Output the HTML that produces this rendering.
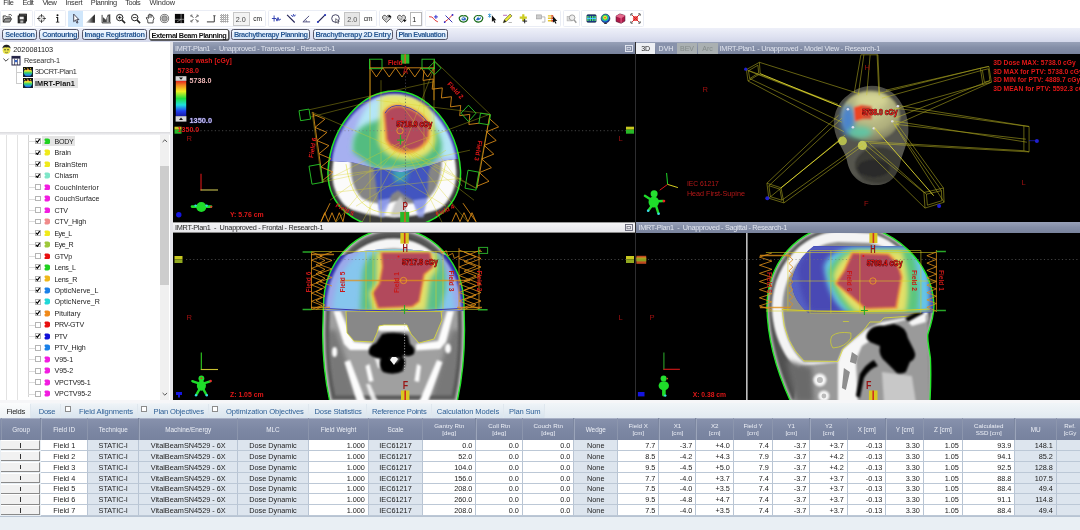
<!DOCTYPE html>
<html lang="en"><head><meta charset="utf-8"><title>External Beam Planning</title>
<style>
html,body{margin:0;padding:0}
body{filter:blur(0.35px);width:1080px;height:530px;overflow:hidden;position:relative;background:#fff;font-family:"Liberation Sans",sans-serif}
.a{position:absolute;box-sizing:border-box}
.t{position:absolute;white-space:pre}
svg{position:absolute;overflow:hidden}
</style></head>
<body>
<div class="a" style="left:0px;top:0px;width:1080px;height:10px;background:#fff"></div>
<span class="t" style="left:3.30px;top:-2.00px;font-size:7.4px;line-height:10px;color:#333;letter-spacing:-0.481px;">File</span>
<span class="t" style="left:22.50px;top:-2.00px;font-size:7.4px;line-height:10px;color:#333;letter-spacing:-0.438px;">Edit</span>
<span class="t" style="left:42.50px;top:-2.00px;font-size:7.4px;line-height:10px;color:#333;letter-spacing:-0.476px;">View</span>
<span class="t" style="left:65.50px;top:-2.00px;font-size:7.4px;line-height:10px;color:#333;letter-spacing:-0.284px;">Insert</span>
<span class="t" style="left:90.80px;top:-2.00px;font-size:7.4px;line-height:10px;color:#333;letter-spacing:-0.350px;">Planning</span>
<span class="t" style="left:125.30px;top:-2.00px;font-size:7.4px;line-height:10px;color:#333;letter-spacing:-0.455px;">Tools</span>
<span class="t" style="left:149.50px;top:-2.00px;font-size:7.4px;line-height:10px;color:#333;letter-spacing:-0.136px;">Window</span>
<div class="a" style="left:0px;top:10px;width:1080px;height:18px;background:#fff"></div>
<div class="a" style="left:0px;top:10.3px;width:32.5px;height:17.2px;background:#fff;border:1px solid #eaedf5;border-radius:1.5px"></div>
<div class="a" style="left:34px;top:10.3px;width:32px;height:17.2px;background:#fff;border:1px solid #eaedf5;border-radius:1.5px"></div>
<div class="a" style="left:67.5px;top:10.3px;width:198.0px;height:17.2px;background:#fff;border:1px solid #eaedf5;border-radius:1.5px"></div>
<div class="a" style="left:267.5px;top:10.3px;width:109.5px;height:17.2px;background:#fff;border:1px solid #eaedf5;border-radius:1.5px"></div>
<div class="a" style="left:378.5px;top:10.3px;width:44.5px;height:17.2px;background:#fff;border:1px solid #eaedf5;border-radius:1.5px"></div>
<div class="a" style="left:424.5px;top:10.3px;width:136.0px;height:17.2px;background:#fff;border:1px solid #eaedf5;border-radius:1.5px"></div>
<div class="a" style="left:562.5px;top:10.3px;width:17.0px;height:17.2px;background:#fff;border:1px solid #eaedf5;border-radius:1.5px"></div>
<div class="a" style="left:581px;top:10.3px;width:62.5px;height:17.2px;background:#fff;border:1px solid #eaedf5;border-radius:1.5px"></div>
<div class="a" style="left:68px;top:11px;width:14.6px;height:15.6px;background:#cfe6fb"></div>
<svg style="left:2.00px;top:13.30px" width="11" height="11" viewBox="-5.5 -5.5 11 11"><path d="M-4.3,3.6V-2.6h2.6l1,1h3.6v1.2" fill="#ddd" stroke="#222" stroke-width=".8"/><path d="M-4.3,3.6l1.8,-3.4h6.6l-1.8,3.4z" fill="#999" stroke="#222" stroke-width=".8"/><path d="M1,-3.6q2.4,-1.2 3.4,0.8" fill="none" stroke="#222" stroke-width=".8"/></svg>
<svg style="left:17.00px;top:13.30px" width="11" height="11" viewBox="-5.5 -5.5 11 11"><rect x="-3.2" y="-4.4" width="7.2" height="7" fill="#666" stroke="#111" stroke-width=".8"/><rect x="-4.4" y="-2.6" width="7.2" height="7" fill="#333" stroke="#111" stroke-width=".8"/><rect x="-2.8" y="-1.8" width="4" height="2.6" fill="#eee"/><rect x="-2.2" y="2" width="3" height="2.2" fill="#bbb"/></svg>
<svg style="left:35.50px;top:13.30px" width="11" height="11" viewBox="-5.5 -5.5 11 11"><circle r="3" fill="none" stroke="#444" stroke-width=".8"/><path d="M-4.4,0h2.8M1.6,0h2.8M0,-4.4v2.8M0,1.6v2.8" stroke="#333" stroke-width=".9"/><circle r=".9" fill="#fff" stroke="#555" stroke-width=".5"/></svg>
<svg style="left:51.50px;top:13.30px" width="11" height="11" viewBox="-5.5 -5.5 11 11"><circle cy="-3.3" r="1" fill="#111"/><path d="M-1.3,-1.4h2v4.6h1.1v.9h-3.4v-.9h1.2v-3.7h-.9z" fill="#111"/></svg>
<svg style="left:69.50px;top:13.30px" width="11" height="11" viewBox="-5.5 -5.5 11 11"><path d="M-1.8,-4.4L-1.8,3.2L0,1.5L1.4,4.6L2.5,4.1L1.2,1.1L3.4,1.1Z" fill="#fff" stroke="#223" stroke-width=".8" stroke-linejoin="round"/></svg>
<svg style="left:85.00px;top:13.30px" width="11" height="11" viewBox="-5.5 -5.5 11 11"><defs><linearGradient id="gw" x1="0" x2="1"><stop offset="0" stop-color="#ddd"/><stop offset="1" stop-color="#111"/></linearGradient></defs><path d="M-4.6,4.2L4.4,-4.2V4.2Z" fill="url(#gw)"/></svg>
<svg style="left:100.50px;top:13.30px" width="11" height="11" viewBox="-5.5 -5.5 11 11"><path d="M-4.4,4.4L-4.4,-3.6M-4.4,4.4L4.4,4.4" stroke="#111" stroke-width=".8" fill="none"/><path d="M-3.6,3.8V-1.5L-0.6,1.2L1.2,-3.8L3.8,-4.3V3.8Z" fill="#444"/><path d="M0.2,3.8V-1L2.2,-3V3.8Z" fill="#aaa"/></svg>
<svg style="left:115.00px;top:13.30px" width="11" height="11" viewBox="-5.5 -5.5 11 11"><circle cx="-.8" cy="-.9" r="3.2" fill="#fff" stroke="#222" stroke-width="1"/><path d="M1.6,1.6L4.6,4.6" stroke="#222" stroke-width="1.5"/><path d="M-2.6,-.9h3.6M-.8,-2.7v3.6" stroke="#222" stroke-width=".9"/></svg>
<svg style="left:129.50px;top:13.30px" width="11" height="11" viewBox="-5.5 -5.5 11 11"><circle cx="-.8" cy="-.9" r="3.2" fill="#fff" stroke="#222" stroke-width="1"/><path d="M1.6,1.6L4.6,4.6" stroke="#222" stroke-width="1.5"/><path d="M-2.6,-.9h3.6" stroke="#222" stroke-width=".9"/></svg>
<svg style="left:144.50px;top:13.30px" width="11" height="11" viewBox="-5.5 -5.5 11 11"><path d="M-2.6,4.4L-2.9,1.6L-4.4,-.6L-3.4,-1.2L-2.2,0V-3.4L-1.3,-3.4V-4.3L-.2,-4.3V-3.8L.9,-3.8V-3.2L2,-3.2L2.6,-1.4L3.6,-.6L2.6,2.2V4.4Z" fill="#fff" stroke="#222" stroke-width=".8" stroke-linejoin="round"/><path d="M-1.3,-3.2V-.6M-.2,-3.6V-.6M.9,-3.4V-.6" stroke="#222" stroke-width=".5"/></svg>
<svg style="left:158.50px;top:13.30px" width="11" height="11" viewBox="-5.5 -5.5 11 11"><circle r="4.1" fill="#f4f4f4" stroke="#444" stroke-width=".7"/><circle r="2.7" fill="#a8a8a8" stroke="#555" stroke-width=".6"/></svg>
<svg style="left:174.00px;top:13.30px" width="11" height="11" viewBox="-5.5 -5.5 11 11"><rect x="-4.6" y="-4.6" width="9.2" height="9.2" fill="#0a0a0a"/><path d="M-4.6,.8h9.2M1.6,-4.6v9.2M-2.4,3.4L1.6,.8" stroke="#ddd" stroke-width=".5"/></svg>
<svg style="left:188.50px;top:13.30px" width="11" height="11" viewBox="-5.5 -5.5 11 11"><path d="M-3.2,-2.8l2,2M3.2,-2.8l-2,2M-3.2,2.8l2,-2M3.2,2.8l-2,-2" stroke="#222" stroke-width=".9"/><path d="M-3.6,-1.8v-1.6h1.6M3.6,-1.8v-1.6h-1.6M-3.6,1.8v1.6h1.6M3.6,1.8v1.6h-1.6" stroke="#222" stroke-width=".6" fill="none"/></svg>
<svg style="left:205.50px;top:13.30px" width="11" height="11" viewBox="-5.5 -5.5 11 11"><path d="M-4.6,3.4h7.4V-2.8" stroke="#222" stroke-width=".9" fill="none"/><path d="M1.6,-2.8h2.6" stroke="#222" stroke-width=".6"/></svg>
<svg style="left:219.00px;top:13.30px" width="11" height="11" viewBox="-5.5 -5.5 11 11"><path d="M-4.4,-3h8.8M-4.4,-1h8.8M-4.4,1h8.8M-4.4,3h8.8M-3,-4.4v8.8M-1,-4.4v8.8M1,-4.4v8.8M3,-4.4v8.8" stroke="#777" stroke-width=".7" stroke-dasharray="1.2 .6"/></svg>
<div class="a" style="left:232.5px;top:12.3px;width:17px;height:13.4px;background:#f3f3f3;border:1px solid #c8c8c8"></div>
<span class="t" style="left:235.80px;top:15.00px;font-size:7.2px;line-height:10px;color:#444;">2.0</span>
<span class="t" style="left:253.20px;top:14.00px;font-size:6.6px;line-height:10px;color:#222;">cm</span>
<svg style="left:270.50px;top:13.30px" width="11" height="11" viewBox="-5.5 -5.5 11 11"><path d="M-4.6,0h2.2M-2.4,-3v6M-2.4,0h2l.9,2.6l1,-3.6l1,3l.8,-1.2h1" stroke="#23a" stroke-width=".9" fill="none"/></svg>
<svg style="left:285.50px;top:13.30px" width="11" height="11" viewBox="-5.5 -5.5 11 11"><path d="M-4.4,-3.6L3.2,4" stroke="#225" stroke-width="1.1"/><path d="M-.6,-3.4l2,1.6l.6,-2.4l1,2l1,-1.6" stroke="#23a" stroke-width=".8" fill="none"/></svg>
<svg style="left:300.50px;top:13.30px" width="11" height="11" viewBox="-5.5 -5.5 11 11"><path d="M3.6,3.4H-3.6L2.6,-2.6" stroke="#447" stroke-width=".9" fill="none"/><path d="M0,3.4q.2,-2 -1.4,-2.4" stroke="#447" stroke-width=".6" fill="none"/></svg>
<svg style="left:315.50px;top:13.30px" width="11" height="11" viewBox="-5.5 -5.5 11 11"><path d="M-3.6,3.6L3.6,-3.6" stroke="#225" stroke-width="1.2"/><circle cx="-3.6" cy="3.6" r="1" fill="#23b"/><circle cx="3.6" cy="-3.6" r="1" fill="#23b"/></svg>
<svg style="left:330.00px;top:13.30px" width="11" height="11" viewBox="-5.5 -5.5 11 11"><circle r="3.8" fill="#fff" stroke="#335" stroke-width=".9"/><path d="M.2,.2V4.4L1.4,3.3L2.4,5L3.2,4.6L2.3,2.9H3.8Z" fill="#fff" stroke="#223" stroke-width=".6"/></svg>
<div class="a" style="left:344px;top:12.3px;width:16.4px;height:13.4px;background:#e6e6e6;border:1px solid #c4c4c4"></div>
<span class="t" style="left:347.20px;top:15.00px;font-size:7.2px;line-height:10px;color:#555;">2.0</span>
<span class="t" style="left:363.80px;top:14.00px;font-size:6.6px;line-height:10px;color:#222;">cm</span>
<svg style="left:380.50px;top:13.30px" width="11" height="11" viewBox="-5.5 -5.5 11 11"><path d="M0,3.8L-3.8,.2Q-4.8,-2.4 -2.4,-3.2Q-.8,-3.4 0,-1.8Q.8,-3.4 2.4,-3.2Q4.8,-2.4 3.8,.2Z" fill="#ddd" stroke="#333" stroke-width=".8"/><path d="M-2.4,-.8l2,2.2l1.4,-3" stroke="#555" stroke-width=".5" fill="none"/><path d="M2.2,-1.2l2,-2.6l2,2.6z" fill="#111" transform="translate(-1,0)"/></svg>
<svg style="left:395.50px;top:13.30px" width="11" height="11" viewBox="-5.5 -5.5 11 11"><path d="M0,3.8L-3.8,.2Q-4.8,-2.4 -2.4,-3.2Q-.8,-3.4 0,-1.8Q.8,-3.4 2.4,-3.2Q4.8,-2.4 3.8,.2Z" fill="#ddd" stroke="#333" stroke-width=".8"/><path d="M-2.4,-.8l2,2.2l1.4,-3" stroke="#555" stroke-width=".5" fill="none"/><path d="M2.2,1.2l2,2.6l2,-2.6z" fill="#111" transform="translate(-1,0)"/></svg>
<div class="a" style="left:410px;top:12.3px;width:11.6px;height:13.4px;background:#fff;border:1px solid #b8b8b8"></div>
<span class="t" style="left:412.20px;top:15.00px;font-size:7.2px;line-height:10px;color:#222;">1</span>
<svg style="left:427.50px;top:13.30px" width="11" height="11" viewBox="-5.5 -5.5 11 11"><path d="M-4.4,-1.8Q-1,-2 0,0T4.4,3.4" stroke="#d22" stroke-width=".9" fill="none"/><path d="M.4,-1.6h4M2.4,-3.6v4" stroke="#22c" stroke-width=".9"/></svg>
<svg style="left:442.50px;top:13.30px" width="11" height="11" viewBox="-5.5 -5.5 11 11"><path d="M-4.2,3.8Q0,1 4.2,-3.8" stroke="#d22" stroke-width=".9" fill="none"/><path d="M-3,-3L3.8,3.8" stroke="#22a" stroke-width=".9"/><circle cx="-3.8" cy="3.6" r=".9" fill="#22c"/><circle cx="4" cy="-3.6" r=".9" fill="#22c"/></svg>
<svg style="left:457.50px;top:13.30px" width="11" height="11" viewBox="-5.5 -5.5 11 11"><path d="M-4.4,-.6Q-3,-3.6 0,-2.6Q3,-3.8 4.4,-.6Q3.8,3.4 0,3.6Q-3.8,3.4 -4.4,-.6Z" fill="#fff" stroke="#161" stroke-width="1.1"/><ellipse cx=".2" cy=".4" rx="2.3" ry="1.7" fill="#36c"/><ellipse cx="-.3" cy="0" rx=".9" ry=".6" fill="#cfe"/></svg>
<svg style="left:472.50px;top:13.30px" width="11" height="11" viewBox="-5.5 -5.5 11 11"><path d="M-4.4,-.2Q-3,-3.6 0,-2.8Q3.4,-3.8 4.4,-.6Q3.8,3.4 0,3.6Q-3.8,3.4 -4.4,-.2Z" fill="#fff" stroke="#161" stroke-width="1.1"/><path d="M-2.6,1.4Q-1,-2.6 2.6,-1.4Q2,2.6 -2.6,1.4Z" fill="#26c"/><ellipse cx="1" cy="-1" rx="1.1" ry=".7" fill="#dff"/></svg>
<svg style="left:487.00px;top:13.30px" width="11" height="11" viewBox="-5.5 -5.5 11 11"><path d="M-1.2,-2.6L-1.2,4L.2,2.7L1.4,5L2.4,4.5L1.3,2.3L3.2,2.3Z" fill="#111" transform="translate(.6,-.6)"/><path d="M-4.4,-4.4l3,3M-1.4,-4.4l-3,3M-2.9,-5v4.2" stroke="#28c" stroke-width=".8"/></svg>
<svg style="left:502.00px;top:13.30px" width="11" height="11" viewBox="-5.5 -5.5 11 11"><path d="M-4.2,4.2L-3,1.2L2.6,-4.4L4.4,-2.6L-1.2,3Z" fill="#ee3" stroke="#553" stroke-width=".7"/><path d="M-4.2,4.2l1.2,-3l1.8,1.8z" fill="#222"/><path d="M-4.4,-3.2h4" stroke="#a4a" stroke-width=".8"/><path d="M1,4h3.4" stroke="#888" stroke-width=".6"/></svg>
<svg style="left:517.50px;top:13.30px" width="11" height="11" viewBox="-5.5 -5.5 11 11"><path d="M-.2,-4.2V2.6M-3.8,-.8H3.4" stroke="#cc2" stroke-width="2.2"/><path d="M1.2,.4V4.8M-1,2.6H3.6" stroke="#111" stroke-width=".9"/></svg>
<svg style="left:534.50px;top:13.30px" width="11" height="11" viewBox="-5.5 -5.5 11 11"><rect x="-4" y="-3.6" width="5" height="4" fill="#ccc" stroke="#999" stroke-width=".6"/><path d="M1,-1.6h3.4v5.2h-3" stroke="#aaa" stroke-width=".8" fill="none"/></svg>
<svg style="left:547.00px;top:13.30px" width="11" height="11" viewBox="-5.5 -5.5 11 11"><path d="M-4.6,-2.6h5M-4.6,-.2h5M-4.6,2.2h5" stroke="#e8c62a" stroke-width="1.4"/><path d="M-1,-3.8l2.4,1.2l-2.4,1.2zM-1,-1.4l2.4,1.2l-2.4,1.2zM-1,1l2.4,1.2l-2.4,1.2z" fill="#d33"/><path d="M.4,-2.4L.4,4.2L1.8,2.9L3,5.2L4,4.7L2.9,2.5L4.8,2.5Z" fill="#111"/></svg>
<svg style="left:565.50px;top:13.30px" width="11" height="11" viewBox="-5.5 -5.5 11 11"><rect x="-4.4" y="-2" width="5" height="4.4" fill="#ddd" stroke="#aaa" stroke-width=".6"/><circle cx=".6" cy="-.8" r="2.8" fill="#eee" stroke="#999" stroke-width=".9"/><path d="M2.6,1.4L4.8,4.2" stroke="#999" stroke-width="1.4"/></svg>
<svg style="left:585.50px;top:13.30px" width="11" height="11" viewBox="-5.5 -5.5 11 11"><rect x="-4.6" y="-3.8" width="9.2" height="7.6" rx="1" fill="#1a3a8a" stroke="#123" stroke-width=".6"/><path d="M-3.6,-2.6v5.2M-1.2,-2.6v5.2M1.2,-2.6v5.2M3.6,-2.6v5.2" stroke="#5e6" stroke-width="1.3"/><path d="M-4.6,0h9.2" stroke="#4cf" stroke-width="1.2"/></svg>
<svg style="left:600.00px;top:13.30px" width="11" height="11" viewBox="-5.5 -5.5 11 11"><defs><radialGradient id="gg" cx=".45" cy=".4"><stop offset="0" stop-color="#e33"/><stop offset=".3" stop-color="#ee3"/><stop offset=".55" stop-color="#3c5"/><stop offset=".8" stop-color="#29d"/><stop offset="1" stop-color="#13a"/></radialGradient></defs><circle r="4.4" fill="url(#gg)" stroke="#124" stroke-width=".6"/><path d="M-1.6,4.4h3.2l-.6,1h-2z" fill="#333"/></svg>
<svg style="left:614.50px;top:13.30px" width="11" height="11" viewBox="-5.5 -5.5 11 11"><path d="M-4.4,-2.4L-.6,-4.6L4.4,-3L4.4,2.6L.6,4.8L-4.4,3Z" fill="#b01848" stroke="#402" stroke-width=".6"/><path d="M-4.4,-2.4L.6,-.6L4.4,-3M.6,-.6V4.8" stroke="#f9b" stroke-width=".6" fill="none"/><path d="M-4.4,-2.4L-.6,-4.6L4.4,-3L.6,-.6Z" fill="#e46a8c"/></svg>
<svg style="left:629.50px;top:13.30px" width="11" height="11" viewBox="-5.5 -5.5 11 11"><circle r="2.6" fill="#e33" opacity=".85"/><path d="M-3.4,-3.4L3.4,3.4M3.4,-3.4L-3.4,3.4" stroke="#c22" stroke-width="1"/><path d="M-4.6,-2.8v-1.8h1.8M4.6,-2.8v-1.8h-1.8M-4.6,2.8v1.8h1.8M4.6,2.8v1.8h-1.8" stroke="#222" stroke-width=".9" fill="none"/></svg>
<div class="a" style="left:0px;top:28px;width:1080px;height:14px;background:linear-gradient(#eef0f9,#dfe2f1 60%,#d3d7ea)"></div>
<div class="a" style="left:2.3px;top:29.3px;width:34.7px;height:10.6px;background:linear-gradient(#f2f8ff,#d6e6f7);border:1px solid #556;border-radius:2.5px"></div>
<span class="t" style="left:5.20px;top:30.00px;font-size:7.4px;line-height:10px;color:#2a5a94;font-weight:bold;letter-spacing:-0.377px;">Selection</span>
<div class="a" style="left:39.3px;top:29.3px;width:40.0px;height:10.6px;background:linear-gradient(#f2f8ff,#d6e6f7);border:1px solid #556;border-radius:2.5px"></div>
<span class="t" style="left:42.20px;top:30.00px;font-size:7.4px;line-height:10px;color:#2a5a94;font-weight:bold;letter-spacing:-0.506px;">Contouring</span>
<div class="a" style="left:81.5px;top:29.3px;width:65.5px;height:10.6px;background:linear-gradient(#f2f8ff,#d6e6f7);border:1px solid #556;border-radius:2.5px"></div>
<span class="t" style="left:84.40px;top:30.00px;font-size:7.4px;line-height:10px;color:#2a5a94;font-weight:bold;letter-spacing:-0.351px;">Image Registration</span>
<div class="a" style="left:149px;top:29.3px;width:79.5px;height:10.6px;background:#fff;border:1px solid #555;border-radius:2px;box-shadow:.5px .8px 0 #333"></div>
<span class="t" style="left:151.60px;top:31.00px;font-size:7.4px;line-height:10px;color:#111;font-weight:bold;letter-spacing:-0.446px;">External Beam Planning</span>
<div class="a" style="left:231px;top:29.3px;width:79px;height:10.6px;background:linear-gradient(#f2f8ff,#d6e6f7);border:1px solid #556;border-radius:2.5px"></div>
<span class="t" style="left:233.90px;top:30.00px;font-size:7.4px;line-height:10px;color:#2a5a94;font-weight:bold;letter-spacing:-0.514px;">Brachytherapy Planning</span>
<div class="a" style="left:312.5px;top:29.3px;width:80.5px;height:10.6px;background:linear-gradient(#f2f8ff,#d6e6f7);border:1px solid #556;border-radius:2.5px"></div>
<span class="t" style="left:315.40px;top:30.00px;font-size:7.4px;line-height:10px;color:#2a5a94;font-weight:bold;letter-spacing:-0.409px;">Brachytherapy 2D Entry</span>
<div class="a" style="left:395.5px;top:29.3px;width:52.0px;height:10.6px;background:linear-gradient(#f2f8ff,#d6e6f7);border:1px solid #556;border-radius:2.5px"></div>
<span class="t" style="left:398.40px;top:30.00px;font-size:7.4px;line-height:10px;color:#2a5a94;font-weight:bold;letter-spacing:-0.553px;">Plan Evaluation</span>
<div class="a" style="left:0px;top:42px;width:173px;height:361px;background:#e9e9ee"></div>
<div class="a" style="left:0px;top:42px;width:169.5px;height:89.5px;background:#fff"></div>
<div class="a" style="left:0px;top:131.5px;width:169.5px;height:3.5px;background:linear-gradient(#d8d8dc,#f4f4f6)"></div>
<div class="a" style="left:0px;top:135px;width:169.5px;height:266px;background:#fff"></div>
<svg style="left:1px;top:43.5px" width="11" height="11" viewBox="0 0 11 11"><circle cx="5.5" cy="6.2" r="3.8" fill="#e8e24a"/><path d="M1.2,4.6Q2,0.6 5.5,0.8Q9,0.6 9.8,4.6Q7.6,3 5.5,3.4Q3.2,3 1.2,4.6Z" fill="#222"/><circle cx="4" cy="5.8" r=".7" fill="#222"/><circle cx="7" cy="5.8" r=".7" fill="#222"/><path d="M4,8.2q1.5,1 3,0" stroke="#553" stroke-width=".6" fill="none"/></svg>
<span class="t" style="left:13.30px;top:45.00px;font-size:7.3px;line-height:10px;color:#222;letter-spacing:-0.025px;">2020081103</span>
<svg style="left:2px;top:56px" width="8" height="8" viewBox="0 0 8 8"><path d="M1.4,2.6L4,5.2L6.6,2.6" stroke="#444" stroke-width="1" fill="none"/></svg>
<svg style="left:11px;top:54.5px" width="10" height="11" viewBox="0 0 10 11"><rect x="1" y="1.4" width="8" height="8.6" fill="#fff" stroke="#224" stroke-width="1"/><rect x="1" y="1.4" width="8" height="2.2" fill="#224"/><path d="M3.6,3.6v6.4M6.4,3.6v6.4" stroke="#224" stroke-width=".7"/><rect x="3.8" y="5" width="2.4" height="2.2" fill="#36c"/></svg>
<span class="t" style="left:24.00px;top:56.00px;font-size:7.3px;line-height:10px;color:#333;letter-spacing:-0.173px;">Research-1</span>
<div class="a" style="left:16px;top:66px;width:0.8px;height:17.5px;background:#ccc"></div>
<div class="a" style="left:16px;top:71.5px;width:6px;height:0.8px;background:#ccc"></div>
<div class="a" style="left:16px;top:82.8px;width:6px;height:0.8px;background:#ccc"></div>
<svg style="left:22.5px;top:66.5px" width="10" height="10" viewBox="0 0 10 10"><defs><linearGradient id="pl1" x1="0" y1="0" x2="0" y2="1"><stop offset="0" stop-color="#d22"/><stop offset=".3" stop-color="#ee3"/><stop offset=".55" stop-color="#3c6"/><stop offset=".8" stop-color="#29e"/><stop offset="1" stop-color="#23a"/></linearGradient></defs><rect width="10" height="10" fill="#123"/><circle cx="5" cy="5.4" r="4.2" fill="url(#pl1)"/><path d="M0,0h10v2.6l-1.6,-1l-1.6,1.6l-1.8,-1.6l-1.8,1.6l-1.6,-1.6l-1.6,1z" fill="#111"/><path d="M1,1l1,1M4,.6l1,1.2M7,1l1,1" stroke="#ee3" stroke-width=".8"/></svg>
<span class="t" style="left:35.00px;top:67.00px;font-size:7.3px;line-height:10px;color:#333;letter-spacing:-0.309px;">3DCRT-Plan1</span>
<div class="a" style="left:33.5px;top:77.8px;width:44.5px;height:10.6px;background:#e4e4e4"></div>
<svg style="left:22.5px;top:77.8px" width="10" height="10" viewBox="0 0 10 10"><defs><linearGradient id="pl2" x1="0" y1="0" x2="0" y2="1"><stop offset="0" stop-color="#d22"/><stop offset=".3" stop-color="#ee3"/><stop offset=".55" stop-color="#3c6"/><stop offset=".8" stop-color="#29e"/><stop offset="1" stop-color="#23a"/></linearGradient></defs><rect width="10" height="10" fill="#123"/><circle cx="5" cy="5.4" r="4.2" fill="url(#pl2)"/><path d="M0,0h10v2.6l-1.6,-1l-1.6,1.6l-1.8,-1.6l-1.8,1.6l-1.6,-1.6l-1.6,1z" fill="#111"/><path d="M1,1l1,1M4,.6l1,1.2M7,1l1,1" stroke="#ee3" stroke-width=".8"/></svg>
<span class="t" style="left:35.00px;top:79.00px;font-size:7.3px;line-height:10px;color:#111;font-weight:bold;letter-spacing:0.066px;">IMRT-Plan1</span>
<div class="a" style="left:5.5px;top:135px;width:0.6px;height:266px;background:#e2e2e2"></div>
<div class="a" style="left:16.5px;top:135px;width:0.6px;height:266px;background:#e2e2e2"></div>
<div class="a" style="left:27.5px;top:135px;width:0.6px;height:262px;background:#d4d4d4"></div>
<div class="a" style="left:41.5px;top:135.6px;width:33.5px;height:10.8px;background:#e4e4e4"></div>
<div class="a" style="left:27.5px;top:141.1px;width:7px;height:0.6px;background:#dcdcdc"></div>
<div class="a" style="left:35.2px;top:138.2px;width:5.6px;height:5.8px;background:#fff;border:.7px solid #b4b4b4"></div>
<svg style="left:35.2px;top:138.2px" width="5.8" height="5.8" viewBox="0 0 5.8 5.8"><path d="M1.1,2.8L2.4,4.3L4.7,1.2" stroke="#000" stroke-width="1.25" fill="none"/></svg>
<svg style="left:43.8px;top:137.7px" width="6.6" height="6.8" viewBox="0 0 6.6 6.8"><path d="M1.4,.4H4Q6.3,.8 6.3,3.4Q6.3,6 4,6.4H1.4Q.3,6.2 .5,4.6L1.5,3.4L.5,2.2Q.3,.6 1.4,.4Z" fill="#1fd11f"/></svg>
<span class="t" style="left:54.50px;top:137.00px;font-size:7.1px;line-height:10px;color:#222;letter-spacing:-0.280px;">BODY</span>
<div class="a" style="left:27.5px;top:152.57999999999998px;width:7px;height:0.6px;background:#dcdcdc"></div>
<div class="a" style="left:35.2px;top:149.67999999999998px;width:5.6px;height:5.8px;background:#fff;border:.7px solid #b4b4b4"></div>
<svg style="left:35.2px;top:149.68px" width="5.8" height="5.8" viewBox="0 0 5.8 5.8"><path d="M1.1,2.8L2.4,4.3L4.7,1.2" stroke="#000" stroke-width="1.25" fill="none"/></svg>
<svg style="left:43.8px;top:149.18px" width="6.6" height="6.8" viewBox="0 0 6.6 6.8"><path d="M1.4,.4H4Q6.3,.8 6.3,3.4Q6.3,6 4,6.4H1.4Q.3,6.2 .5,4.6L1.5,3.4L.5,2.2Q.3,.6 1.4,.4Z" fill="#f0ea1a"/></svg>
<span class="t" style="left:54.50px;top:148.00px;font-size:7.1px;line-height:10px;color:#222;letter-spacing:-0.015px;">Brain</span>
<div class="a" style="left:27.5px;top:164.06px;width:7px;height:0.6px;background:#dcdcdc"></div>
<div class="a" style="left:35.2px;top:161.16px;width:5.6px;height:5.8px;background:#fff;border:.7px solid #b4b4b4"></div>
<svg style="left:35.2px;top:161.16px" width="5.8" height="5.8" viewBox="0 0 5.8 5.8"><path d="M1.1,2.8L2.4,4.3L4.7,1.2" stroke="#000" stroke-width="1.25" fill="none"/></svg>
<svg style="left:43.8px;top:160.66px" width="6.6" height="6.8" viewBox="0 0 6.6 6.8"><path d="M1.4,.4H4Q6.3,.8 6.3,3.4Q6.3,6 4,6.4H1.4Q.3,6.2 .5,4.6L1.5,3.4L.5,2.2Q.3,.6 1.4,.4Z" fill="#f0ea1a"/></svg>
<span class="t" style="left:54.50px;top:160.00px;font-size:7.1px;line-height:10px;color:#222;letter-spacing:-0.016px;">BrainStem</span>
<div class="a" style="left:27.5px;top:175.54px;width:7px;height:0.6px;background:#dcdcdc"></div>
<div class="a" style="left:35.2px;top:172.64px;width:5.6px;height:5.8px;background:#fff;border:.7px solid #b4b4b4"></div>
<svg style="left:35.2px;top:172.64px" width="5.8" height="5.8" viewBox="0 0 5.8 5.8"><path d="M1.1,2.8L2.4,4.3L4.7,1.2" stroke="#000" stroke-width="1.25" fill="none"/></svg>
<svg style="left:43.8px;top:172.14px" width="6.6" height="6.8" viewBox="0 0 6.6 6.8"><path d="M1.4,.4H4Q6.3,.8 6.3,3.4Q6.3,6 4,6.4H1.4Q.3,6.2 .5,4.6L1.5,3.4L.5,2.2Q.3,.6 1.4,.4Z" fill="#7fe6c8"/></svg>
<span class="t" style="left:54.50px;top:171.00px;font-size:7.1px;line-height:10px;color:#222;letter-spacing:-0.011px;">Chiasm</span>
<div class="a" style="left:27.5px;top:187.01999999999998px;width:7px;height:0.6px;background:#dcdcdc"></div>
<div class="a" style="left:35.2px;top:184.11999999999998px;width:5.6px;height:5.8px;background:#fff;border:.7px solid #b4b4b4"></div>
<svg style="left:43.8px;top:183.62px" width="6.6" height="6.8" viewBox="0 0 6.6 6.8"><path d="M1.4,.4H4Q6.3,.8 6.3,3.4Q6.3,6 4,6.4H1.4Q.3,6.2 .5,4.6L1.5,3.4L.5,2.2Q.3,.6 1.4,.4Z" fill="#f21de0"/></svg>
<span class="t" style="left:54.50px;top:183.00px;font-size:7.1px;line-height:10px;color:#222;letter-spacing:0.145px;">CouchInterior</span>
<div class="a" style="left:27.5px;top:198.5px;width:7px;height:0.6px;background:#dcdcdc"></div>
<div class="a" style="left:35.2px;top:195.6px;width:5.6px;height:5.8px;background:#fff;border:.7px solid #b4b4b4"></div>
<svg style="left:43.8px;top:195.1px" width="6.6" height="6.8" viewBox="0 0 6.6 6.8"><path d="M1.4,.4H4Q6.3,.8 6.3,3.4Q6.3,6 4,6.4H1.4Q.3,6.2 .5,4.6L1.5,3.4L.5,2.2Q.3,.6 1.4,.4Z" fill="#f21de0"/></svg>
<span class="t" style="left:54.50px;top:194.00px;font-size:7.1px;line-height:10px;color:#222;">CouchSurface</span>
<div class="a" style="left:27.5px;top:209.98px;width:7px;height:0.6px;background:#dcdcdc"></div>
<div class="a" style="left:35.2px;top:207.07999999999998px;width:5.6px;height:5.8px;background:#fff;border:.7px solid #b4b4b4"></div>
<svg style="left:43.8px;top:206.58px" width="6.6" height="6.8" viewBox="0 0 6.6 6.8"><path d="M1.4,.4H4Q6.3,.8 6.3,3.4Q6.3,6 4,6.4H1.4Q.3,6.2 .5,4.6L1.5,3.4L.5,2.2Q.3,.6 1.4,.4Z" fill="#f21de0"/></svg>
<span class="t" style="left:54.50px;top:206.00px;font-size:7.1px;line-height:10px;color:#222;letter-spacing:-0.400px;">CTV</span>
<div class="a" style="left:27.5px;top:221.45999999999998px;width:7px;height:0.6px;background:#dcdcdc"></div>
<div class="a" style="left:35.2px;top:218.55999999999997px;width:5.6px;height:5.8px;background:#fff;border:.7px solid #b4b4b4"></div>
<svg style="left:43.8px;top:218.06px" width="6.6" height="6.8" viewBox="0 0 6.6 6.8"><path d="M1.4,.4H4Q6.3,.8 6.3,3.4Q6.3,6 4,6.4H1.4Q.3,6.2 .5,4.6L1.5,3.4L.5,2.2Q.3,.6 1.4,.4Z" fill="#f08a8a"/></svg>
<span class="t" style="left:54.50px;top:217.00px;font-size:7.1px;line-height:10px;color:#222;letter-spacing:-0.156px;">CTV_High</span>
<div class="a" style="left:27.5px;top:232.94px;width:7px;height:0.6px;background:#dcdcdc"></div>
<div class="a" style="left:35.2px;top:230.04px;width:5.6px;height:5.8px;background:#fff;border:.7px solid #b4b4b4"></div>
<svg style="left:35.2px;top:230.04px" width="5.8" height="5.8" viewBox="0 0 5.8 5.8"><path d="M1.1,2.8L2.4,4.3L4.7,1.2" stroke="#000" stroke-width="1.25" fill="none"/></svg>
<svg style="left:43.8px;top:229.54px" width="6.6" height="6.8" viewBox="0 0 6.6 6.8"><path d="M1.4,.4H4Q6.3,.8 6.3,3.4Q6.3,6 4,6.4H1.4Q.3,6.2 .5,4.6L1.5,3.4L.5,2.2Q.3,.6 1.4,.4Z" fill="#f0ea1a"/></svg>
<span class="t" style="left:54.50px;top:229.00px;font-size:7.1px;line-height:10px;color:#222;letter-spacing:-0.626px;">Eye_L</span>
<div class="a" style="left:27.5px;top:244.42000000000002px;width:7px;height:0.6px;background:#dcdcdc"></div>
<div class="a" style="left:35.2px;top:241.52px;width:5.6px;height:5.8px;background:#fff;border:.7px solid #b4b4b4"></div>
<svg style="left:35.2px;top:241.52px" width="5.8" height="5.8" viewBox="0 0 5.8 5.8"><path d="M1.1,2.8L2.4,4.3L4.7,1.2" stroke="#000" stroke-width="1.25" fill="none"/></svg>
<svg style="left:43.8px;top:241.02px" width="6.6" height="6.8" viewBox="0 0 6.6 6.8"><path d="M1.4,.4H4Q6.3,.8 6.3,3.4Q6.3,6 4,6.4H1.4Q.3,6.2 .5,4.6L1.5,3.4L.5,2.2Q.3,.6 1.4,.4Z" fill="#9ec83a"/></svg>
<span class="t" style="left:54.50px;top:240.00px;font-size:7.1px;line-height:10px;color:#222;letter-spacing:-0.562px;">Eye_R</span>
<div class="a" style="left:27.5px;top:255.9px;width:7px;height:0.6px;background:#dcdcdc"></div>
<div class="a" style="left:35.2px;top:253.0px;width:5.6px;height:5.8px;background:#fff;border:.7px solid #b4b4b4"></div>
<svg style="left:43.8px;top:252.5px" width="6.6" height="6.8" viewBox="0 0 6.6 6.8"><path d="M1.4,.4H4Q6.3,.8 6.3,3.4Q6.3,6 4,6.4H1.4Q.3,6.2 .5,4.6L1.5,3.4L.5,2.2Q.3,.6 1.4,.4Z" fill="#e81010"/></svg>
<span class="t" style="left:54.50px;top:252.00px;font-size:7.1px;line-height:10px;color:#222;letter-spacing:-0.261px;">GTVp</span>
<div class="a" style="left:27.5px;top:267.38px;width:7px;height:0.6px;background:#dcdcdc"></div>
<div class="a" style="left:35.2px;top:264.48px;width:5.6px;height:5.8px;background:#fff;border:.7px solid #b4b4b4"></div>
<svg style="left:35.2px;top:264.48px" width="5.8" height="5.8" viewBox="0 0 5.8 5.8"><path d="M1.1,2.8L2.4,4.3L4.7,1.2" stroke="#000" stroke-width="1.25" fill="none"/></svg>
<svg style="left:43.8px;top:263.98px" width="6.6" height="6.8" viewBox="0 0 6.6 6.8"><path d="M1.4,.4H4Q6.3,.8 6.3,3.4Q6.3,6 4,6.4H1.4Q.3,6.2 .5,4.6L1.5,3.4L.5,2.2Q.3,.6 1.4,.4Z" fill="#1fd11f"/></svg>
<span class="t" style="left:54.50px;top:263.00px;font-size:7.1px;line-height:10px;color:#222;letter-spacing:-0.382px;">Lens_L</span>
<div class="a" style="left:27.5px;top:278.86px;width:7px;height:0.6px;background:#dcdcdc"></div>
<div class="a" style="left:35.2px;top:275.96000000000004px;width:5.6px;height:5.8px;background:#fff;border:.7px solid #b4b4b4"></div>
<svg style="left:35.2px;top:275.96px" width="5.8" height="5.8" viewBox="0 0 5.8 5.8"><path d="M1.1,2.8L2.4,4.3L4.7,1.2" stroke="#000" stroke-width="1.25" fill="none"/></svg>
<svg style="left:43.8px;top:275.46px" width="6.6" height="6.8" viewBox="0 0 6.6 6.8"><path d="M1.4,.4H4Q6.3,.8 6.3,3.4Q6.3,6 4,6.4H1.4Q.3,6.2 .5,4.6L1.5,3.4L.5,2.2Q.3,.6 1.4,.4Z" fill="#f0b81a"/></svg>
<span class="t" style="left:54.50px;top:275.00px;font-size:7.1px;line-height:10px;color:#222;letter-spacing:-0.328px;">Lens_R</span>
<div class="a" style="left:27.5px;top:290.34000000000003px;width:7px;height:0.6px;background:#dcdcdc"></div>
<div class="a" style="left:35.2px;top:287.44000000000005px;width:5.6px;height:5.8px;background:#fff;border:.7px solid #b4b4b4"></div>
<svg style="left:35.2px;top:287.44px" width="5.8" height="5.8" viewBox="0 0 5.8 5.8"><path d="M1.1,2.8L2.4,4.3L4.7,1.2" stroke="#000" stroke-width="1.25" fill="none"/></svg>
<svg style="left:43.8px;top:286.94px" width="6.6" height="6.8" viewBox="0 0 6.6 6.8"><path d="M1.4,.4H4Q6.3,.8 6.3,3.4Q6.3,6 4,6.4H1.4Q.3,6.2 .5,4.6L1.5,3.4L.5,2.2Q.3,.6 1.4,.4Z" fill="#1a80e8"/></svg>
<span class="t" style="left:54.50px;top:286.00px;font-size:7.1px;line-height:10px;color:#222;letter-spacing:0.050px;">OpticNerve_L</span>
<div class="a" style="left:27.5px;top:301.82px;width:7px;height:0.6px;background:#dcdcdc"></div>
<div class="a" style="left:35.2px;top:298.92px;width:5.6px;height:5.8px;background:#fff;border:.7px solid #b4b4b4"></div>
<svg style="left:35.2px;top:298.92px" width="5.8" height="5.8" viewBox="0 0 5.8 5.8"><path d="M1.1,2.8L2.4,4.3L4.7,1.2" stroke="#000" stroke-width="1.25" fill="none"/></svg>
<svg style="left:43.8px;top:298.42px" width="6.6" height="6.8" viewBox="0 0 6.6 6.8"><path d="M1.4,.4H4Q6.3,.8 6.3,3.4Q6.3,6 4,6.4H1.4Q.3,6.2 .5,4.6L1.5,3.4L.5,2.2Q.3,.6 1.4,.4Z" fill="#20d8d8"/></svg>
<span class="t" style="left:54.50px;top:297.00px;font-size:7.1px;line-height:10px;color:#222;letter-spacing:0.076px;">OpticNerve_R</span>
<div class="a" style="left:27.5px;top:313.3px;width:7px;height:0.6px;background:#dcdcdc"></div>
<div class="a" style="left:35.2px;top:310.40000000000003px;width:5.6px;height:5.8px;background:#fff;border:.7px solid #b4b4b4"></div>
<svg style="left:35.2px;top:310.4px" width="5.8" height="5.8" viewBox="0 0 5.8 5.8"><path d="M1.1,2.8L2.4,4.3L4.7,1.2" stroke="#000" stroke-width="1.25" fill="none"/></svg>
<svg style="left:43.8px;top:309.9px" width="6.6" height="6.8" viewBox="0 0 6.6 6.8"><path d="M1.4,.4H4Q6.3,.8 6.3,3.4Q6.3,6 4,6.4H1.4Q.3,6.2 .5,4.6L1.5,3.4L.5,2.2Q.3,.6 1.4,.4Z" fill="#f08a1a"/></svg>
<span class="t" style="left:54.50px;top:309.00px;font-size:7.1px;line-height:10px;color:#222;letter-spacing:0.039px;">Pituitary</span>
<div class="a" style="left:27.5px;top:324.78px;width:7px;height:0.6px;background:#dcdcdc"></div>
<div class="a" style="left:35.2px;top:321.88px;width:5.6px;height:5.8px;background:#fff;border:.7px solid #b4b4b4"></div>
<svg style="left:43.8px;top:321.38px" width="6.6" height="6.8" viewBox="0 0 6.6 6.8"><path d="M1.4,.4H4Q6.3,.8 6.3,3.4Q6.3,6 4,6.4H1.4Q.3,6.2 .5,4.6L1.5,3.4L.5,2.2Q.3,.6 1.4,.4Z" fill="#e81010"/></svg>
<span class="t" style="left:54.50px;top:320.00px;font-size:7.1px;line-height:10px;color:#222;letter-spacing:-0.220px;">PRV-GTV</span>
<div class="a" style="left:27.5px;top:336.26px;width:7px;height:0.6px;background:#dcdcdc"></div>
<div class="a" style="left:35.2px;top:333.36px;width:5.6px;height:5.8px;background:#fff;border:.7px solid #b4b4b4"></div>
<svg style="left:35.2px;top:333.36px" width="5.8" height="5.8" viewBox="0 0 5.8 5.8"><path d="M1.1,2.8L2.4,4.3L4.7,1.2" stroke="#000" stroke-width="1.25" fill="none"/></svg>
<svg style="left:43.8px;top:332.86px" width="6.6" height="6.8" viewBox="0 0 6.6 6.8"><path d="M1.4,.4H4Q6.3,.8 6.3,3.4Q6.3,6 4,6.4H1.4Q.3,6.2 .5,4.6L1.5,3.4L.5,2.2Q.3,.6 1.4,.4Z" fill="#1010d8"/></svg>
<span class="t" style="left:54.50px;top:332.00px;font-size:7.1px;line-height:10px;color:#222;letter-spacing:-0.436px;">PTV</span>
<div class="a" style="left:27.5px;top:347.74px;width:7px;height:0.6px;background:#dcdcdc"></div>
<div class="a" style="left:35.2px;top:344.84000000000003px;width:5.6px;height:5.8px;background:#fff;border:.7px solid #b4b4b4"></div>
<svg style="left:43.8px;top:344.34px" width="6.6" height="6.8" viewBox="0 0 6.6 6.8"><path d="M1.4,.4H4Q6.3,.8 6.3,3.4Q6.3,6 4,6.4H1.4Q.3,6.2 .5,4.6L1.5,3.4L.5,2.2Q.3,.6 1.4,.4Z" fill="#1a80e8"/></svg>
<span class="t" style="left:54.50px;top:343.00px;font-size:7.1px;line-height:10px;color:#222;letter-spacing:-0.170px;">PTV_High</span>
<div class="a" style="left:27.5px;top:359.22px;width:7px;height:0.6px;background:#dcdcdc"></div>
<div class="a" style="left:35.2px;top:356.32000000000005px;width:5.6px;height:5.8px;background:#fff;border:.7px solid #b4b4b4"></div>
<svg style="left:43.8px;top:355.82px" width="6.6" height="6.8" viewBox="0 0 6.6 6.8"><path d="M1.4,.4H4Q6.3,.8 6.3,3.4Q6.3,6 4,6.4H1.4Q.3,6.2 .5,4.6L1.5,3.4L.5,2.2Q.3,.6 1.4,.4Z" fill="#f21de0"/></svg>
<span class="t" style="left:54.50px;top:355.00px;font-size:7.1px;line-height:10px;color:#222;letter-spacing:-0.089px;">V95-1</span>
<div class="a" style="left:27.5px;top:370.70000000000005px;width:7px;height:0.6px;background:#dcdcdc"></div>
<div class="a" style="left:35.2px;top:367.80000000000007px;width:5.6px;height:5.8px;background:#fff;border:.7px solid #b4b4b4"></div>
<svg style="left:43.8px;top:367.3px" width="6.6" height="6.8" viewBox="0 0 6.6 6.8"><path d="M1.4,.4H4Q6.3,.8 6.3,3.4Q6.3,6 4,6.4H1.4Q.3,6.2 .5,4.6L1.5,3.4L.5,2.2Q.3,.6 1.4,.4Z" fill="#f21de0"/></svg>
<span class="t" style="left:54.50px;top:366.00px;font-size:7.1px;line-height:10px;color:#222;letter-spacing:-0.029px;">V95-2</span>
<div class="a" style="left:27.5px;top:382.18px;width:7px;height:0.6px;background:#dcdcdc"></div>
<div class="a" style="left:35.2px;top:379.28000000000003px;width:5.6px;height:5.8px;background:#fff;border:.7px solid #b4b4b4"></div>
<svg style="left:43.8px;top:378.78px" width="6.6" height="6.8" viewBox="0 0 6.6 6.8"><path d="M1.4,.4H4Q6.3,.8 6.3,3.4Q6.3,6 4,6.4H1.4Q.3,6.2 .5,4.6L1.5,3.4L.5,2.2Q.3,.6 1.4,.4Z" fill="#f21de0"/></svg>
<span class="t" style="left:54.50px;top:378.00px;font-size:7.1px;line-height:10px;color:#222;letter-spacing:-0.209px;">VPCTV95-1</span>
<div class="a" style="left:27.5px;top:393.65999999999997px;width:7px;height:0.6px;background:#dcdcdc"></div>
<div class="a" style="left:35.2px;top:390.76px;width:5.6px;height:5.8px;background:#fff;border:.7px solid #b4b4b4"></div>
<svg style="left:43.8px;top:390.26px" width="6.6" height="6.8" viewBox="0 0 6.6 6.8"><path d="M1.4,.4H4Q6.3,.8 6.3,3.4Q6.3,6 4,6.4H1.4Q.3,6.2 .5,4.6L1.5,3.4L.5,2.2Q.3,.6 1.4,.4Z" fill="#f21de0"/></svg>
<span class="t" style="left:54.50px;top:389.00px;font-size:7.1px;line-height:10px;color:#222;letter-spacing:-0.153px;">VPCTV95-2</span>
<div class="a" style="left:159.8px;top:135px;width:9.7px;height:266px;background:#f0f0f0"></div>
<div class="a" style="left:159.8px;top:165.7px;width:9.7px;height:119.3px;background:#cdcdcd"></div>
<svg style="left:159.8px;top:137px" width="9.7" height="8" viewBox="0 0 9.7 8"><path d="M2.6,5L4.85,2.8L7.1,5" stroke="#555" stroke-width="1" fill="none"/></svg>
<svg style="left:159.8px;top:390px" width="9.7" height="8" viewBox="0 0 9.7 8"><path d="M2.6,3L4.85,5.2L7.1,3" stroke="#555" stroke-width="1" fill="none"/></svg>
<div class="a" style="left:169.5px;top:42px;width:3.5px;height:361px;background:#e4e4e9"></div>
<div class="a" style="left:173px;top:42px;width:907px;height:358px;background:#000"></div>
<div class="a" style="left:173px;top:42.3px;width:461.5px;height:11.5px;background:linear-gradient(#98a1b8,#858fa8 45%,#78829c)"></div><span class="t" style="left:175.00px;top:44.00px;font-size:7.3px;line-height:10px;color:#e0e4ee;letter-spacing:-0.330px;">IMRT-Plan1  -  Unapproved - Transversal - Research-1</span>
<div class="a" style="left:636px;top:42.3px;width:444px;height:11.5px;background:linear-gradient(#98a1b8,#858fa8 45%,#78829c)"></div><span class="t" style="left:719.60px;top:44.00px;font-size:7.3px;line-height:10px;color:#e0e4ee;letter-spacing:-0.256px;">IMRT-Plan1 - Unapproved - Model View - Research-1</span>
<div class="a" style="left:173px;top:221.7px;width:461.5px;height:11.3px;background:linear-gradient(#f4f4f6,#e6e6ea);border-top:.6px solid #999;border-bottom:.6px solid #888"></div><span class="t" style="left:175.00px;top:223.00px;font-size:7.3px;line-height:10px;color:#262626;letter-spacing:-0.288px;">IMRT-Plan1  -  Unapproved - Frontal - Research-1</span>
<div class="a" style="left:636px;top:221.7px;width:444px;height:11.3px;background:linear-gradient(#98a1b8,#858fa8 45%,#78829c)"></div><span class="t" style="left:638.50px;top:223.00px;font-size:7.3px;line-height:10px;color:#e0e4ee;letter-spacing:-0.312px;">IMRT-Plan1  -  Unapproved - Sagittal - Research-1</span>
<div class="a" style="left:634.5px;top:42.3px;width:1.6px;height:359px;background:#2e2e30"></div>
<div class="a" style="left:636.4px;top:42.6px;width:18.6px;height:11.2px;background:#eef0f4"></div>
<span class="t" style="left:641.23px;top:44.00px;font-size:7px;line-height:10px;color:#222;">3D</span>
<div class="a" style="left:655.6px;top:42.6px;width:21px;height:11.2px;background:#8892ab"></div>
<span class="t" style="left:658.61px;top:44.00px;font-size:7px;line-height:10px;color:#e4e8f0;">DVH</span>
<div class="a" style="left:677.2px;top:42.6px;width:19.6px;height:11.2px;background:#aab0b2"></div>
<span class="t" style="left:680.00px;top:44.00px;font-size:7px;line-height:10px;color:#838b8a;">BEV</span>
<div class="a" style="left:697.6px;top:42.6px;width:20px;height:11.2px;background:#aab0b2"></div>
<span class="t" style="left:702.35px;top:44.00px;font-size:7px;line-height:10px;color:#838b8a;">Arc</span>
<svg style="left:624.8px;top:44.6px" width="8" height="7" viewBox="0 0 8 7"><rect x=".5" y=".5" width="7" height="6" fill="none" stroke="#e8ecf4" stroke-width=".9"/><rect x="2" y="2.4" width="3.4" height="2.4" fill="none" stroke="#e8ecf4" stroke-width=".7"/></svg>
<svg style="left:624.8px;top:224px" width="8" height="7" viewBox="0 0 8 7"><rect x=".5" y=".5" width="7" height="6" fill="none" stroke="#667" stroke-width=".9"/><rect x="2" y="2.4" width="3.4" height="2.4" fill="none" stroke="#667" stroke-width=".7"/></svg>
<svg style="left:173px;top:53.8px" width="461.5" height="167.9" viewBox="173 53.8 461.5 167.9" font-family="Liberation Sans, sans-serif">
<defs><clipPath id="v1c"><path d="M394.3,90.8C427,90.8 457.5,126 460.5,170C462,205 434,228 394.3,228C355,228 326.5,205 328,170C331,126 361.5,90.8 394.3,90.8Z"/></clipPath><clipPath id="v1d"><path d="M320,85H470V157L446,160L430,165L401,172L372,167L352,162L320,160Z"/></clipPath><filter id="b1" x="-20%" y="-20%" width="140%" height="140%"><feGaussianBlur stdDeviation="1"/></filter><filter id="b2" x="-30%" y="-30%" width="160%" height="160%"><feGaussianBlur stdDeviation="2.6"/></filter><filter id="b3" x="-30%" y="-30%" width="160%" height="160%"><feGaussianBlur stdDeviation="4.5"/></filter><linearGradient id="cbar" x1="0" y1="0" x2="0" y2="1"><stop offset="0" stop-color="#e02020"/><stop offset=".12" stop-color="#f08020"/><stop offset=".3" stop-color="#f0f020"/><stop offset=".5" stop-color="#20e040"/><stop offset=".68" stop-color="#20e0e0"/><stop offset=".85" stop-color="#2040f0"/><stop offset="1" stop-color="#1818a0"/></linearGradient></defs>
<rect x="173" y="53.8" width="461.5" height="167.9" fill="#000"/>
<g clip-path="url(#v1c)">
<path d="M394.3,90.8C427,90.8 457.5,126 460.5,170C462,205 434,228 394.3,228C355,228 326.5,205 328,170C331,126 361.5,90.8 394.3,90.8Z" fill="#fbfbfb"/>
<path d="M394.3,90.8C427,90.8 457.5,126 460.5,170C462,205 434,228 394.3,228C355,228 326.5,205 328,170C331,126 361.5,90.8 394.3,90.8Z" fill="none" stroke="#3a3a3a" stroke-width="8.5" filter="url(#b1)"/>
<path d="M338,204Q394,230 452,204L454,232H336Z" fill="#3a3a3a" filter="url(#b1)"/>
<path d="M351,156Q349,186 362,198Q378,207 395,201Q412,207 428,198Q442,186 442,156Z" fill="#858585" filter="url(#b1)"/>
<path d="M390,216L395,203L401,196L409,216Z" fill="#c8c8c8" filter="url(#b1)"/>
<path d="M368,160L374,170L378,198L380,210L383,210L392,194L398,190L406,196L413,200L419,212L422,212L427,196L429,170L436,160Z" fill="#4254c0" filter="url(#b1)"/>
<path d="M378,200L379.5,217H383.5L391,198ZM413,200L418,217H423.5L427,198Z" fill="#9aa6ee" opacity=".85" filter="url(#b1)"/>
<path d="M390,160L396,184L401,180L405,184L411,160Z" fill="#3cb4b4" opacity=".85" filter="url(#b2)"/>
<g clip-path="url(#v1d)">
<path d="M394.3,90.8C427,90.8 457.5,126 460.5,170C462,205 434,228 394.3,228C355,228 326.5,205 328,170C331,126 361.5,90.8 394.3,90.8Z" fill="#2626a0"/>
<ellipse cx="394.3" cy="162" rx="63" ry="69" fill="#a6b0f0" filter="url(#b1)"/>
<path d="M372,100Q395,92 420,100Q452,120 456,158H400L352,150Q356,116 372,100Z" fill="#b4e6f6" filter="url(#b2)"/>
<path d="M353,152Q350,128 372,122L384,118L432,124Q446,140 440,156L426,168H374Z" fill="#52bc80" filter="url(#b2)"/>
<path d="M381,95Q406,92 430,100L436,138Q434,158 408,160Q382,158 378,140Z" fill="#e6e46c" filter="url(#b2)"/>
<path d="M383,112Q388,103 400,104Q422,108 431,124L430,138Q424,152 406,153.5Q390,152 385,140Z" fill="#f0a040" filter="url(#b1)"/>
<path d="M385,113Q390,106 400,106.5Q419,110 428.5,125L427.5,137Q422,149 406,150.5Q392,149 387.5,139Z" fill="#b24a5c" filter="url(#b1)"/>
<path d="M394.3,90.8C427,90.8 457.5,126 460.5,170C462,205 434,228 394.3,228C355,228 326.5,205 328,170C331,126 361.5,90.8 394.3,90.8Z" fill="none" stroke="#2a2aa0" stroke-width="5.5" opacity=".85" filter="url(#b1)"/>
</g>
</g>
<path d="M394.3,90.8C427,90.8 457.5,126 460.5,170C462,205 434,228 394.3,228C355,228 326.5,205 328,170C331,126 361.5,90.8 394.3,90.8Z" fill="none" stroke="#22e428" stroke-width="1.5"/>
<path d="M385,113Q390,104 401,105.5Q420,109 429.5,125" fill="none" stroke="#3030c0" stroke-width=".8"/>
<path d="M346,164Q352,206 380,212Q396,214 410,212Q438,206 446,162" fill="none" stroke="#e0e030" stroke-width=".7" opacity=".8"/>
<g stroke="#d8d020" stroke-width=".6" fill="none" opacity=".6"><path d="M370,68V222M434,68V152M381,80V222M424,80V150"/><path d="M309.5,109.5L434,81.5M310,117L370,101.5M322,182L470,150M312,112L322,182M312,112L400,150M322,182L405,140"/><path d="M434,60L490,114M398,100L462,186M404,146L490,114M404,146L434,68"/><path d="M490,114L476,188M476,188L392,144M490,114L376,100M404,146L476,188"/><path d="M336,222L404,140M362,222L404,146L442,222M404,146L468,222M404,146L330,200M404,146L474,200"/><path d="M330,176L452,160M336,192L462,178M352,150L446,206M446,150L356,206"/></g>
<g stroke="#e09018" stroke-width=".85" fill="none">
<polyline points="370.0,67.6 376.4,76.8 382.8,67.6 389.2,76.8 395.6,67.6 402.0,76.8 408.4,67.6 414.8,76.8 421.2,67.6 427.6,76.8 434.0,67.6"/><path d="M370,67.6H434"/>
<polyline points="424.0,70.0 423.0,80.2 433.2,78.8 432.2,89.0 442.3,87.7 441.4,97.8 451.5,96.5 450.5,106.7 460.7,105.3 459.7,115.5 469.8,114.2 468.9,124.3 479.0,123.0"/>
<polyline points="313.0,114.0 324.9,119.0 315.0,127.2 326.9,132.2 317.0,140.4 328.9,145.4 319.0,153.6 330.9,158.6 321.0,166.8 332.9,171.8 323.0,180.0"/>
<polyline points="489.0,118.0 498.6,126.7 486.6,131.6 496.2,140.3 484.2,145.2 493.8,153.9 481.8,158.8 491.4,167.5 479.4,172.4 489.0,181.1 477.0,186.0"/>
<polyline points="321.0,221.5 324.7,212.5 328.3,221.5 332.0,212.5 335.7,221.5 339.3,212.5 343.0,221.5"/><path d="M330,203L321,221.5M345,212L343,221.5"/>
<polyline points="452.0,221.5 456.0,212.5 460.0,221.5 464.0,212.5 468.0,221.5 472.0,212.5 476.0,221.5"/><path d="M463,203L476,221.5"/>
<path d="M370,60V100M434,60V100M313,112L323,182M490,114L477,188"/>
</g>
<g stroke="#28c828" stroke-width=".9" fill="none"><rect x="369.5" y="59" width="12.5" height="9.5"/><rect x="422" y="59" width="12.5" height="9.5"/><path d="M299,110.5l10,-1.6l1.6,10l-10,1.6zM480.5,113l10,1.6l-1.6,10l-10,-1.6zM309,166l11,-2l3,18l-11,2zM468,170l11,2l-3,18l-11,-2zM434.5,61.5l6.5,6.5l-6.5,6.5l-6.5,-6.5zM468.5,105l7.5,8l-7.5,8.4l-7.5,-8.4z"/></g>
<circle cx="400" cy="130.5" r="3.2" fill="none" stroke="#f0a020" stroke-width=".8"/><path d="M400.5,134.5v10M397,140h7" stroke="#28a828" stroke-width="1.2"/>
<circle cx="392.5" cy="118.5" r="1" fill="#e01818"/>
<path d="M186,130.5H628" stroke="#777" stroke-width=".7" stroke-dasharray="1.2 2.4" opacity=".8"/>
<path d="M405.5,76V212" stroke="#556" stroke-width=".7" stroke-dasharray="1.2 2"/>
<rect x="400.8" y="54" width="8.5" height="9.4" fill="#28b828"/><rect x="404.4" y="54" width="1.5" height="9.4" fill="#d06020"/>
<rect x="400.2" y="211.8" width="9" height="10.4" fill="#28b828"/><rect x="404.2" y="211.8" width="1.5" height="10.4" fill="#d06020"/>
<rect x="174.5" y="126.5" width="7" height="3" fill="#c8c820"/><rect x="174.5" y="129.5" width="7" height="4" fill="#28b828"/>
<rect x="626" y="126.5" width="8" height="3" fill="#c8c820"/><rect x="626" y="129.5" width="8" height="4" fill="#28b828"/>
<rect x="175.8" y="80.4" width="10.4" height="35.8" fill="url(#cbar)"/>
<rect x="175.6" y="76" width="10.8" height="4.6" fill="#d8d8d8"/><path d="M179,77.2h4l-2,2.4z" fill="#111"/>
<rect x="175.6" y="116" width="10.8" height="5.4" fill="#d8d8d8"/><path d="M179,119.8h4l-2,-2.4z" fill="#111"/>
<text x="175.8" y="63.2" font-size="6.8" fill="#e01818" text-anchor="start" font-weight="bold" textLength="56" lengthAdjust="spacingAndGlyphs">Color wash [cGy]</text>
<text x="177.4" y="72.9" font-size="6.6" fill="#e01818" text-anchor="start" font-weight="bold" textLength="21.6" lengthAdjust="spacingAndGlyphs">5738.0</text>
<text x="189.5" y="82.6" font-size="6.6" fill="#f0b8b8" text-anchor="start" font-weight="bold" textLength="22" lengthAdjust="spacingAndGlyphs">5738.0</text>
<text x="189.5" y="122.6" font-size="6.8" fill="#c8c0f0" text-anchor="start" font-weight="bold" textLength="22.5" lengthAdjust="spacingAndGlyphs" stroke="#3a3a90" stroke-width=".5" paint-order="stroke">1350.0</text>
<text x="177.6" y="131.6" font-size="6.6" fill="#e01818" text-anchor="start" font-weight="bold" textLength="21.6" lengthAdjust="spacingAndGlyphs">1350.0</text>
<text x="186.5" y="140.5" font-size="7.6" fill="#a01010" text-anchor="start" font-weight="normal" >R</text>
<text x="618.5" y="140.5" font-size="7.6" fill="#a01010" text-anchor="start" font-weight="normal" >L</text>
<text x="402.8" y="73.6" font-size="10" fill="#981414" text-anchor="start" font-weight="bold" textLength="5.4" lengthAdjust="spacingAndGlyphs">A</text>
<text x="402.6" y="209.8" font-size="10" fill="#981414" text-anchor="start" font-weight="bold" textLength="5.4" lengthAdjust="spacingAndGlyphs">P</text>
<text x="230" y="217.2" font-size="7" fill="#e01818" text-anchor="start" font-weight="bold" textLength="33.6" lengthAdjust="spacingAndGlyphs">Y: 5.76 cm</text>
<text x="396.6" y="126.6" font-size="8.6" fill="#d41414" text-anchor="start" font-weight="bold" textLength="35.8" lengthAdjust="spacingAndGlyphs" stroke="#2a0000" stroke-width=".7" paint-order="stroke">5716.9 cGy</text>
<text x="388" y="65" font-size="6.6" fill="#e01818" text-anchor="start" font-weight="bold" textLength="14.5" lengthAdjust="spacingAndGlyphs">Field</text>
<text font-size="6.5" fill="#e01818" font-weight="bold" transform="translate(447,84) rotate(48)">Field 2</text>
<text font-size="6.5" fill="#e01818" font-weight="bold" transform="translate(478,140) rotate(100)">Field 3</text>
<text font-size="6.5" fill="#e01818" font-weight="bold" transform="translate(313,158) rotate(-80)">Field 6</text>
<text font-size="6.3" fill="#e01818" font-weight="bold" transform="translate(335,206.5) rotate(28)">Field 5</text>
<text font-size="6.3" fill="#e01818" font-weight="bold" transform="translate(437,216.5) rotate(-26)">Field 4</text>
<path d="M201,173.5V190.2" stroke="#d81818" stroke-width="1.1"/><path d="M200.5,189.8H218" stroke="#c8c050" stroke-width="1.1"/>
<circle cx="178.8" cy="214.6" r="2.7" fill="#1414e0"/>
<circle cx="201.3" cy="206.8" r="5" fill="#1fdc2a"/><path d="M192,206.4h19" stroke="#1fdc2a" stroke-width="2.6" stroke-linecap="round"/><circle cx="195.6" cy="205.4" r="1.2" fill="#38d8e8"/><circle cx="206.6" cy="205.4" r="1.2" fill="#38d8e8"/><circle cx="211.2" cy="206.6" r="1.1" fill="#e83030"/>
</svg>
<svg style="left:636.1px;top:53.8px" width="443.9" height="167.9" viewBox="636.1 53.8 443.9 167.9" font-family="Liberation Sans, sans-serif">
<defs><clipPath id="v2c"><path d="M872,85.5C884,85.5 896,92 902,104C907,113 909,124 908.5,132C908,142 904,150 901,160C898,176 890,185 876,185C860,185 850,176 847,160C845,150 836,142 834,126C833,112 840,100 848,95C855,89 863,85.5 872,85.5Z"/></clipPath><radialGradient id="hd" cx=".5" cy=".35" r=".7"><stop offset="0" stop-color="#d2d296"/><stop offset=".6" stop-color="#aeae7c"/><stop offset="1" stop-color="#70705a"/></radialGradient></defs>
<rect x="636.1" y="53.8" width="443.9" height="167.9" fill="#000"/>
<g clip-path="url(#v2c)" filter="url(#b1)">
<rect x="830" y="84" width="84" height="104" fill="#4b4b44"/>
<ellipse cx="872" cy="150" rx="34" ry="30" fill="#55554e"/>
<ellipse cx="879" cy="165" rx="24" ry="18" fill="#3a3a36"/>
<ellipse cx="874" cy="168" rx="16" ry="9" fill="#2b2b29"/>
<ellipse cx="870.5" cy="116" rx="29.5" ry="25" fill="url(#hd)"/>
<ellipse cx="848" cy="120" rx="7" ry="15" fill="#4c84cc" filter="url(#b2)"/>
<ellipse cx="860" cy="132" rx="12" ry="6" fill="#5cc8a8" filter="url(#b2)" opacity=".9"/>
<ellipse cx="872" cy="100" rx="16" ry="7" fill="#d4d494" filter="url(#b2)"/>
<path d="M854,107L862,104.5L863,119L855,121Z" fill="#ec4420"/><path d="M862,104.5L872,106L872,119L863,119Z" fill="#d83a24" opacity=".85"/>
</g>
<circle cx="842.6" cy="140.6" r="4.4" fill="#b4bc4e"/><circle cx="862.5" cy="145.2" r="4.6" fill="#c0c65c"/>
<circle cx="848" cy="109" r="1.3" fill="#dde"/><circle cx="898" cy="106" r="1.3" fill="#dde"/><circle cx="892.5" cy="121" r="1.3" fill="#dde"/><circle cx="853" cy="127" r="1.3" fill="#dde"/><circle cx="874" cy="128" r="1.3" fill="#dde"/>
<g stroke="#cfc826" stroke-width=".6" fill="none" opacity=".82"><path d="M746.5,69.4L759.5,62.1L760.3,73.5L748.1,80.8ZM748.5,70.6L758,65L758.8,72.8L749.8,78.4Z"/><path d="M759.5,62.1L860,93.7M748.1,80.8L844,131.5M746.5,69.4L838,104M748.5,70.6L840,106M749.8,78.4L842,122"/><path d="M861,54.5L854.3,93M864,54.5L858.3,95.3M870.2,55L866.8,95M878,54.5L879.8,95.3M877.2,54.5L879,95M861,54.6H878"/><path d="M980.5,68L989,66.2L991.5,82L983,84.2ZM982.5,70L988.5,68.6L990,80.5L984.5,82Z"/><path d="M980.5,68L880,93M989,66.2L886,90M991.5,82L897,124M983,84.2L884,112M982.5,70L882,98M990,80.5L895,118"/><path d="M1024,125.7L1029.2,126.3L1029.2,151.7L1024,150.5Z"/><path d="M899,105.4L1029.2,126.3M896,108L1024,125.7M892.6,120.6L1027,142M895,124L1026,139M864.3,141.2L1024,150.5M870,143L1029.2,151.7"/><path d="M767,183L781.1,187.6L784,202.7L768.9,198ZM769,185.5L780,189L782,200L770.5,196.5Z"/><path d="M767,183L838.7,115M784,202.7L863.2,145.2M768.9,198L845,135M769,185.5L842,118M782,200L862,143"/><path d="M924,192.3L943.6,187.9L944.2,202L925.1,207.9ZM926.5,194L941.5,190.5L942,200.5L927.5,205Z"/><path d="M924,192.3L864.3,143.4M943.6,187.9L895.8,121.7M925.1,207.9L862,146M944.2,202L894,124M926.5,194L868,142M941.5,190.5L893,122"/></g>
<g stroke="#e0d830" stroke-width="1" fill="none" opacity=".9"><path d="M760.3,73.5L841.4,106.7M781.1,187.6L840.6,139.5M933.8,195.5L874.1,127.1"/></g>
<circle cx="745.8" cy="69" r="1.6" fill="#2020d0"/><circle cx="1037" cy="140.8" r="2" fill="#2020d0"/><path d="M1029,140.5H1036" stroke="#2020d0" stroke-width=".7"/><circle cx="767.4" cy="198" r="2" fill="#2020d0"/><circle cx="939.2" cy="205.7" r="2" fill="#2020d0"/>
<text x="864.5" y="70.2" font-size="7.6" fill="#a01010" text-anchor="start" font-weight="normal" >H</text>
<text x="702.5" y="91.8" font-size="7.6" fill="#a01010" text-anchor="start" font-weight="normal" >R</text>
<text x="1021.5" y="184.6" font-size="7.6" fill="#a01010" text-anchor="start" font-weight="normal" >L</text>
<text x="864" y="206" font-size="7.6" fill="#a01010" text-anchor="start" font-weight="normal" >F</text>
<text x="687" y="185.8" font-size="6.6" fill="#b81818" text-anchor="start" font-weight="normal" textLength="32" lengthAdjust="spacingAndGlyphs">IEC 61217</text>
<text x="687" y="195.4" font-size="6.6" fill="#b81818" text-anchor="start" font-weight="normal" textLength="58" lengthAdjust="spacingAndGlyphs">Head First-Supine</text>
<text x="862" y="115.2" font-size="8.6" fill="#e01818" text-anchor="start" font-weight="bold" textLength="35.8" lengthAdjust="spacingAndGlyphs" stroke="#2a0000" stroke-width=".7" paint-order="stroke">5738.0 cGy</text>
<text x="993.3" y="64.8" font-size="6.7" fill="#e41818" text-anchor="start" font-weight="bold" >3D Dose MAX: 5738.0 cGy</text>
<text x="993.3" y="73.35" font-size="6.7" fill="#e41818" text-anchor="start" font-weight="bold" >3D MAX for PTV: 5738.0 cGy</text>
<text x="993.3" y="81.9" font-size="6.7" fill="#e41818" text-anchor="start" font-weight="bold" >3D MIN for PTV: 4889.7 cGy</text>
<text x="993.3" y="90.45" font-size="6.7" fill="#e41818" text-anchor="start" font-weight="bold" >3D MEAN for PTV: 5592.3 cGy</text>
<path d="M667.7,184.2L666.7,172.8" stroke="#20d828" stroke-width="1"/><path d="M667.7,184.2L659.8,190" stroke="#d81818" stroke-width="1"/><path d="M667.7,184.2L678,187.4" stroke="#d8d020" stroke-width="1"/>
<circle cx="654.2" cy="193.6" r="3.5" fill="#26e030"/><ellipse cx="653.8" cy="201.8" rx="5.2" ry="5.6" fill="#1fdc2a"/><path d="M650.4,199L645,195.6M657.6,201L663,200.8M651.6,206L648.6,210M656.4,206.4L658.4,213" stroke="#1fdc2a" stroke-width="2.4" stroke-linecap="round"/><circle cx="664" cy="200.9" r="1.4" fill="#e82020"/><circle cx="648.2" cy="210.6" r="1.3" fill="#38d8e8"/><circle cx="658.7" cy="213.6" r="1.3" fill="#38d8e8"/>
</svg>
<svg style="left:173px;top:233px" width="461.5" height="167" viewBox="173 233 461.5 167" font-family="Liberation Sans, sans-serif">
<defs><clipPath id="v3c"><path d="M393.8,229C432,229 463.5,262 464,305L464.5,330C464.5,355 462,380 457,402H330C325,380 322.5,355 322.8,330L323.5,305C324,262 355,229 393.8,229Z"/></clipPath><clipPath id="v3d"><path d="M320,310.8V262Q394,236 470,262V310.8Z"/></clipPath></defs>
<rect x="173" y="233" width="461.5" height="167" fill="#000"/>
<g clip-path="url(#v3c)">
<path d="M393.8,229C432,229 463.5,262 464,305L464.5,330C464.5,355 462,380 457,402H330C325,380 322.5,355 322.8,330L323.5,305C324,262 355,229 393.8,229Z" fill="#4a4a4a"/>
<path d="M393.8,238.5C428,238.5 458,266 459,312H328.5C329.5,266 359,238.5 393.8,238.5Z" fill="#f6f6f6" filter="url(#b1)"/>
<path d="M393.8,248.5C420,248.5 450,270 451,312H336.5C337.5,270 367,248.5 393.8,248.5Z" fill="#8a8a8a" filter="url(#b1)"/>
<path d="M324,310H463L459,402H328Z" fill="#a0a0a0"/>
<path d="M336,330L346,360L358,402H330L326,330ZM452,330L442,360L430,402H458L462,330Z" fill="#787878" filter="url(#b2)"/>
<path d="M393.8,229C432,229 463.5,262 464,305L464.5,330C464.5,355 462,380 457,402H330C325,380 322.5,355 322.8,330L323.5,305C324,262 355,229 393.8,229Z" fill="none" stroke="#5a5a5a" stroke-width="13" filter="url(#b1)"/>
<path d="M393.8,229C432,229 463.5,262 464,305L464.5,330C464.5,355 462,380 457,402H330C325,380 322.5,355 322.8,330L323.5,305C324,262 355,229 393.8,229Z" fill="none" stroke="#c2c2c2" stroke-width="4.6" filter="url(#b1)"/>
<g fill="#fcfcfc" filter="url(#b1)"><path d="M333.5,311L340.5,311L354,342L373,343.5L373,350L350,350L344,344Z"/><path d="M454,311L447,311L438,341L416,344L416,350.5L440,349L446,342Z"/><path d="M376,326Q378,322 383,323H408Q413,322 414,327Q413,332 408,331H383Q377,332 376,326Z"/><ellipse cx="334.6" cy="352" rx="2.6" ry="5"/><ellipse cx="448" cy="348.5" rx="3" ry="5"/><path d="M344.5,362L350,360L366,402H357ZM437,360L442.5,362L428,402H419Z"/><path d="M365.5,366L369.5,364L373.5,381L369,382ZM417,364L421,366L419,382L414.5,381Z"/><path d="M366,384L370,384L378,402H372ZM372,350L378,352L382,368L378,368Z" opacity=".85"/></g>
<path d="M346,311L347,333L354,341L373,342L377,333L379,326L384,325H407L411,334L419,343L434,339L442,320L441,311Z" fill="#888" stroke="#e0e030" stroke-width=".8"/>
<g fill="#000" filter="url(#b1)"><path d="M382,334Q395,331 408,335L410,344Q416,348 414,354Q408,358 404,355L402,358H384Q376,360 369,354Q367,346 376,343Z"/><path d="M381,358Q386,354 392,360L396,363L400,358Q406,356 405,364L403,371Q394,376 383,372Q378,366 381,358Z"/></g>
<path d="M390,360L394,365L398,359L396,357L392,357Z" fill="#f4f4f4"/>
<g clip-path="url(#v3d)">
<path d="M393.8,229C432,229 463.5,262 464,305L464.5,330C464.5,355 462,380 457,402H330C325,380 322.5,355 322.8,330L323.5,305C324,262 355,229 393.8,229Z" fill="#3030a8"/>
<path d="M393.8,234C430,234 461,264 461.5,311H326C326.5,264 357,234 393.8,234Z" fill="#9ca8ea" filter="url(#b1)"/>
<path d="M393.8,240C424,240 454,268 455,311H332.5C333.5,268 363,240 393.8,240Z" fill="#86c6ee" filter="url(#b2)"/>
<path d="M362,275Q364,258 376,253H438Q448,268 446,290L440,311H360Z" fill="#5cc08a" filter="url(#b2)"/>
<path d="M376,252H436L437,270L430,280L426,311H373L369,293L376,283Z" fill="#e2e06a" filter="url(#b2)"/>
<path d="M380,252H431L434,267L425,275L420,302L413,307.5L377,309L371.5,293L378.5,283L381.5,267Z" fill="#f0a040" filter="url(#b1)"/>
<path d="M382,253H429.6L432.5,267L423.5,274L418.6,301L412,306L378.5,307.5L373.5,293L380,283.5L383,267Z" fill="#b24a5c" filter="url(#b1)"/>
</g>
</g>
<path d="M393.8,229C432,229 463.5,262 464,305L464.5,330C464.5,355 462,380 457,402H330C325,380 322.5,355 322.8,330L323.5,305C324,262 355,229 393.8,229Z" fill="none" stroke="#22e428" stroke-width="1.4"/>
<g stroke="#d8d020" stroke-width=".7" fill="none" opacity=".8"><path d="M311,251.5H482M311,309.5H482M366,251.5V311.5H443V251.5M373,251.5V311.5M436,251.5V311.5"/></g>
<path d="M326,308.5Q393,313 461,308.5" stroke="#3838b8" stroke-width="1" fill="none"/>
<g stroke="#e09018" stroke-width=".8" fill="none">
<polyline points="311.5,252.0 322.0,256.1 311.5,260.2 322.0,264.3 311.5,268.4 322.0,272.5 311.5,276.6 322.0,280.8 311.5,284.9 322.0,289.0 311.5,293.1 322.0,297.2 311.5,301.3 322.0,305.4 311.5,309.5"/><polyline points="332.0,252.0 320.0,256.2 332.0,260.5 320.0,264.8 332.0,269.0 320.0,273.2 332.0,277.5 320.0,281.8 332.0,286.0"/><polyline points="316.0,256.0 325.0,260.5 316.0,264.9 325.0,269.4 316.0,273.8 325.0,278.3 316.0,282.8 325.0,287.2 316.0,291.7 325.0,296.1 316.0,300.6 325.0,305.0 316.0,309.5"/><path d="M311.5,252V309.5"/>
<polyline points="459.0,250.0 470.0,254.2 459.0,258.5 470.0,262.8 459.0,267.0 470.0,271.2 459.0,275.5 470.0,279.8 459.0,284.0 470.0,288.2 459.0,292.5 470.0,296.8 459.0,301.0 470.0,305.2 459.0,309.5"/><polyline points="481.0,250.0 470.0,254.2 481.0,258.5 470.0,262.8 481.0,267.0 470.0,271.2 481.0,275.5 470.0,279.8 481.0,284.0 470.0,288.2 481.0,292.5 470.0,296.8 481.0,301.0 470.0,305.2 481.0,309.5"/><polyline points="464.0,252.0 476.0,256.8 464.0,261.6 476.0,266.4 464.0,271.2 476.0,276.0 464.0,280.8 476.0,285.5 464.0,290.3 476.0,295.1 464.0,299.9 476.0,304.7 464.0,309.5"/><polyline points="440.0,248.0 441.6,253.0 446.3,250.7 447.9,255.7 452.7,253.3 454.3,258.4 459.0,256.0"/><path d="M459,248V309.5M479,248V309.5"/>
<path d="M311,254.5H334M311,307.5H330M457,307.5H482M340,280.5H470" stroke-width="1.4" opacity=".75"/>
</g>
<g stroke="#28a828" stroke-width="1.5" fill="none"><path d="M302.6,252H311.5M302.6,309.6H311.5M478,309.8H487.6"/><rect x="478.6" y="247.4" width="9" height="6" stroke-width="1"/></g>
<circle cx="403.5" cy="280.5" r="3.2" fill="none" stroke="#f0a020" stroke-width=".8"/><path d="M404.5,305v9M401,310h7" stroke="#28a828" stroke-width="1.1"/>
<circle cx="398.5" cy="256.5" r="1" fill="#e01818"/>
<path d="M186,259.5H628" stroke="#777" stroke-width=".7" stroke-dasharray="1.2 2.4" opacity=".8"/>
<path d="M404.6,323V371" stroke="#ddd" stroke-width=".7" stroke-dasharray="1.2 1.6"/>
<rect x="400.4" y="233" width="8.4" height="10.6" fill="#d8c820"/><rect x="403.9" y="233" width="1.6" height="10.6" fill="#c83020"/>
<rect x="401" y="390.5" width="8.4" height="11" fill="#d8c820"/><rect x="404.4" y="390.5" width="1.6" height="11" fill="#d03020"/>
<rect x="174.5" y="256" width="8" height="3.4" fill="#c8c820"/><rect x="174.5" y="259.4" width="8" height="3.6" fill="#90a820"/>
<rect x="626" y="256" width="8" height="3.4" fill="#c8c820"/><rect x="626" y="259.4" width="8" height="3.6" fill="#90a820"/>
<text x="402.4" y="252.4" font-size="10" fill="#981414" text-anchor="start" font-weight="bold" textLength="5.4" lengthAdjust="spacingAndGlyphs">H</text>
<text x="402.8" y="388.6" font-size="10" fill="#981414" text-anchor="start" font-weight="bold" textLength="5.4" lengthAdjust="spacingAndGlyphs">F</text>
<text x="186.5" y="320" font-size="7.6" fill="#a01010" text-anchor="start" font-weight="normal" >R</text>
<text x="618.5" y="320" font-size="7.6" fill="#a01010" text-anchor="start" font-weight="normal" >L</text>
<text x="402" y="265.2" font-size="8.6" fill="#d41414" text-anchor="start" font-weight="bold" textLength="35.8" lengthAdjust="spacingAndGlyphs" stroke="#2a0000" stroke-width=".7" paint-order="stroke">5717.8 cGy</text>
<text x="230" y="396.8" font-size="7" fill="#e01818" text-anchor="start" font-weight="bold" textLength="33.6" lengthAdjust="spacingAndGlyphs">Z: 1.05 cm</text>
<text font-size="6.6" fill="#c81818" font-weight="bold" transform="translate(311,292.5) rotate(-90)">Field 6</text>
<text font-size="6.6" fill="#c81818" font-weight="bold" transform="translate(345,292.5) rotate(-90)">Field 5</text>
<text font-size="6.6" fill="#c81818" font-weight="bold" transform="translate(399,293) rotate(-90)">Field 1</text>
<text font-size="6.6" fill="#c81818" font-weight="bold" transform="translate(449,270.5) rotate(90)">Field 3</text>
<text font-size="6.6" fill="#c81818" font-weight="bold" transform="translate(477.3,270.5) rotate(90)">Field 2</text>
<path d="M201.3,352.6V370" stroke="#30d020" stroke-width="1.1"/><path d="M200.8,369.5H218" stroke="#c8c030" stroke-width="1.1"/>
<path d="M176,392h6v3h-2v2.4h-2v-2.4h-2z" fill="#1414e0"/>
<g transform="translate(201.4,385.8) scale(1.08)"><circle cx="0" cy="-6.8" r="2.7" fill="#1fdc2a"/><circle cx="0" cy="-7" r=".9" fill="#c84020"/><ellipse cx="0" cy="0" rx="4.2" ry="4.6" fill="#1fdc2a"/><path d="M-3,-2.4L-8,-4.2M3,-2.4L8,-4.2M-2,3.6L-4.6,8.2M2,3.6L4.6,8.2" stroke="#1fdc2a" stroke-width="2.2" stroke-linecap="round"/><circle cx="-8.4" cy="-4.4" r="1" fill="#1fdc2a"/><circle cx="8.6" cy="-4.4" r="1.1" fill="#e83030"/><circle cx="-5" cy="8.8" r="1.1" fill="#38d8e8"/><circle cx="5" cy="8.8" r="1.1" fill="#38d8e8"/></g>
</svg>
<svg style="left:636.1px;top:233px" width="443.9" height="167" viewBox="636.1 233 443.9 167" font-family="Liberation Sans, sans-serif">
<defs><clipPath id="v4c"><path d="M838,226C798,228 768,262 767,306C767.5,340 777,372 791,402H930C931,385 931,370 930.5,358C929,346 927,340 928,334C932,322 934.5,312 934,304C932,268 906,240 872,228Z"/></clipPath><clipPath id="v4d"><path d="M814,246Q797,258 791.5,282Q793,300 808,312.5H950V246Z"/></clipPath></defs>
<rect x="636.1" y="233" width="443.9" height="167" fill="#000"/>
<rect x="746.3" y="233" width="1.3" height="169" fill="#ececec"/>
<g clip-path="url(#v4c)">
<path d="M838,226C798,228 768,262 767,306C767.5,340 777,372 791,402H930C931,385 931,370 930.5,358C929,346 927,340 928,334C932,322 934.5,312 934,304C932,268 906,240 872,228Z" fill="#505050"/>
<path d="M838,226C798,228 768,262 767,306C767.5,340 777,372 791,402H930C931,385 931,370 930.5,358C929,346 927,340 928,334C932,322 934.5,312 934,304C932,268 906,240 872,228Z" fill="none" stroke="#b4b4b4" stroke-width="4.6" filter="url(#b1)"/>
<path d="M838,231C802,233 773,266 772,306C772,334 784,356 798,372L870,372L928,320C929,276 906,244 872,233Z" fill="#f4f4f4" filter="url(#b1)"/>
<path d="M838,242C808,244 784,270 782.5,306C782.5,330 790,350 804,362L838,362L843,350L866,330L882,322L916,316L922,306C922,274 902,250 870,243Z" fill="#8c8c8c" filter="url(#b1)"/>
<path d="M800,366L838,362L866,330L928,314L930,402H794Z" fill="#9a9a9a" filter="url(#b1)"/><path d="M786,360L812,368L814,402H796Z" fill="#6a6a6a" filter="url(#b2)"/>
<g fill="#f6f6f6" filter="url(#b1)"><path d="M838,362L843,350L866,330L880,324L884,332L862,346L856,360L858,402H838Z"/><circle cx="820" cy="380" r="6.5"/><circle cx="824" cy="396" r="5.5"/><path d="M905,318L926,312L926,322L912,326Z"/><path d="M882,372L912,376L916,402H884Z" opacity=".5"/></g>
<circle cx="820" cy="380" r="3" fill="#bbb"/><circle cx="824" cy="396" r="2.4" fill="#bbb"/>
<path d="M844,368L850,372L846,390L842,388ZM852,352L858,356L856,364L850,362Z" fill="#8e8e8e"/>
<path d="M782.5,312Q784,342 804,361L838,361.5L843,349L864,330L870,322L880,322L884,318L912,316L920,311" fill="none" stroke="#e0e030" stroke-width=".8"/>
<path d="M832,336Q838,331 851,333L851,338Q846,347 833,348Q829,342 832,336ZM843,321.5h6" fill="none" stroke="#d8d828" stroke-width=".7"/>
<g fill="#000" filter="url(#b1)"><path d="M868,332Q874,324 884,326L894,324Q906,326 908,338L914,350Q918,358 910,362L906,372Q898,376 894,370L886,362Q878,356 880,346L870,342Q864,338 868,332Z"/><path d="M874,360Q866,364 860,374L856,396L860,398L864,378Q870,368 878,366Z"/><path d="M905,318L922,309L924,313L908,322Z"/></g>
<g clip-path="url(#v4d)">
<path d="M838,226C798,228 768,262 767,306C767.5,340 777,372 791,402H930C931,385 931,370 930.5,358C929,346 927,340 928,334C932,322 934.5,312 934,304C932,268 906,240 872,228Z" fill="#3434aa"/>
<path d="M786,246H926V312H780Z" fill="#5560c4" filter="url(#b1)"/>
<path d="M798,270Q800,256 812,250H860V312H812Q800,300 798,270Z" fill="#4a4ab4" filter="url(#b2)"/><path d="M824,266Q830,250 852,248H920Q932,270 930,312H846Q828,300 824,266Z" fill="#66c4e8" filter="url(#b2)"/>
<path d="M828,272Q836,252 856,250H912Q922,280 918,312H850Q833,296 828,272Z" fill="#5cc67e" filter="url(#b2)"/>
<path d="M833,276Q840,254 858,251H902Q912,280 906,312H856Q840,298 833,276Z" fill="#e2e068" filter="url(#b2)"/>
<path d="M851.5,251.5L889,253Q900,262 903,277L897.5,309L865,310L851,298L834.6,283.5L843.5,270Z" fill="#f0a040" filter="url(#b1)"/>
<path d="M853,253.4L888,255Q898,263 901,277L895.5,307L866,308L852.5,296.5L837,283.5L845.5,270Z" fill="#b24a5c" filter="url(#b1)"/>
</g>
</g>
<path d="M838,226C798,228 768,262 767,306C767.5,340 777,372 791,402H930C931,385 931,370 930.5,358C929,346 927,340 928,334C932,322 934.5,312 934,304C932,268 906,240 872,228Z" fill="none" stroke="#22e428" stroke-width="1.4"/>
<g stroke="#d8d020" stroke-width=".7" fill="none" opacity=".8"><path d="M766,252.5H936M766,311H936M788,252.5V311M810,250.5V313H921V250.5ZM831,250.5V313M860,250.5V313M788,281H936"/></g>
<path d="M782,309.5Q850,314 930,309" stroke="#d8d020" stroke-width="1" fill="none"/>
<g stroke="#e09018" stroke-width=".8" fill="none">
<polyline points="772.0,253.0 759.5,257.1 772.0,261.1 759.5,265.2 772.0,269.3 759.5,273.4 772.0,277.4 759.5,281.5 772.0,285.6 759.5,289.6 772.0,293.7 759.5,297.8 772.0,301.9 759.5,305.9 772.0,310.0"/><polyline points="789.0,256.0 793.0,259.7 789.0,263.4 793.0,267.1 789.0,270.9 793.0,274.6 789.0,278.3 793.0,282.0 789.0,285.7 793.0,289.4 789.0,293.1 793.0,296.9 789.0,300.6 793.0,304.3 789.0,308.0"/><path d="M760,255.5H791M760,307.5H791" stroke-width="1.6" opacity=".8"/>
<polyline points="936.5,252.0 927.0,255.7 936.5,259.4 927.0,263.1 936.5,266.8 927.0,270.4 936.5,274.1 927.0,277.8 936.5,281.5 927.0,285.2 936.5,288.9 927.0,292.6 936.5,296.2 927.0,299.9 936.5,303.6 927.0,307.3 936.5,311.0"/><path d="M936.5,250V312"/>
</g>
<g stroke="#28a828" stroke-width="1.6" fill="none"><path d="M936.5,251.5H946M936.5,310.5H946"/></g>
<circle cx="873" cy="281" r="3.2" fill="none" stroke="#f0a020" stroke-width=".8"/><path d="M864.5,306v9M861,310.5h7" stroke="#28a828" stroke-width="1.1"/>
<circle cx="863.5" cy="256" r="1" fill="#e01818"/>
<path d="M648,259.5H1080" stroke="#777" stroke-width=".7" stroke-dasharray="1.2 2.4" opacity=".8"/>
<rect x="869.5" y="233" width="8" height="10" fill="#d8c820"/><rect x="872.7" y="233" width="1.6" height="10" fill="#d03020"/>
<rect x="869" y="390.5" width="8.6" height="11" fill="#d8c820"/><rect x="872.5" y="390.5" width="1.6" height="11" fill="#d03020"/>
<rect x="636.5" y="255.8" width="9.8" height="8" fill="#c04a20"/><rect x="636.5" y="258" width="9.8" height="3.4" fill="#8aa020"/><rect x="636.5" y="257.4" width="9.8" height="1" fill="#c8a020"/>
<text x="870.4" y="253" font-size="10" fill="#981414" text-anchor="start" font-weight="bold" textLength="5.4" lengthAdjust="spacingAndGlyphs">H</text>
<text x="866" y="389" font-size="10" fill="#981414" text-anchor="start" font-weight="bold" textLength="5.4" lengthAdjust="spacingAndGlyphs">F</text>
<text x="649.5" y="319.6" font-size="7.6" fill="#a01010" text-anchor="start" font-weight="normal" >P</text>
<text x="866.8" y="265.8" font-size="8.6" fill="#d41414" text-anchor="start" font-weight="bold" textLength="35.8" lengthAdjust="spacingAndGlyphs" stroke="#2a0000" stroke-width=".7" paint-order="stroke">5709.4 cGy</text>
<text x="692.8" y="396.8" font-size="7" fill="#e01818" text-anchor="start" font-weight="bold" textLength="33.4" lengthAdjust="spacingAndGlyphs">X: 0.38 cm</text>
<text font-size="6.6" fill="#c81818" font-weight="bold" transform="translate(767.5,272) rotate(90)">Field 6</text>
<text font-size="6.6" fill="#c81818" font-weight="bold" transform="translate(847,270.5) rotate(90)">Field 6</text>
<text font-size="6.6" fill="#c81818" font-weight="bold" transform="translate(912,270) rotate(90)">Field 2</text>
<text font-size="6.6" fill="#c81818" font-weight="bold" transform="translate(938.7,270) rotate(90)">Field 1</text>
<path d="M664,352.6V369.8" stroke="#28a028" stroke-width="1.1"/><path d="M663.5,369.3H680" stroke="#d81818" stroke-width="1.1"/>
<rect x="638" y="392" width="6.6" height="4.4" fill="#1414e0"/>
<circle cx="663.7" cy="378.4" r="3" fill="#26e030"/><ellipse cx="663.9" cy="385.8" rx="5.2" ry="4.6" fill="#1fdc2a"/><rect x="662.2" y="388" width="3.6" height="8.4" rx="1.4" fill="#1fdc2a"/><circle cx="665.4" cy="395.6" r="1.2" fill="#38d8e8"/><circle cx="667.4" cy="378.6" r=".8" fill="#c86020"/>
</svg>
<div class="a" style="left:0px;top:400px;width:1080px;height:130px;background:#e9eff4"></div>
<div class="a" style="left:0px;top:400px;width:1080px;height:2.6px;background:#f6f6f8"></div>
<div class="a" style="left:0px;top:402.6px;width:1080px;height:15px;background:linear-gradient(#f1f5f8,#e2eaf1)"></div>
<div class="a" style="left:0px;top:403px;width:30px;height:15px;background:linear-gradient(#fbfcfd,#eef2f5)"></div>
<div class="a" style="left:30px;top:404px;width:514px;height:13.6px;background:linear-gradient(#eef3f7,#d9e4ee)"></div>
<span class="t" style="left:6.40px;top:407.00px;font-size:7.6px;line-height:10px;color:#222;letter-spacing:-0.279px;">Fields</span>
<span class="t" style="left:38.70px;top:407.00px;font-size:7.6px;line-height:10px;color:#2f6096;letter-spacing:-0.285px;">Dose</span>
<span class="t" style="left:79.00px;top:407.00px;font-size:7.6px;line-height:10px;color:#2f6096;letter-spacing:-0.110px;">Field Alignments</span>
<span class="t" style="left:153.60px;top:407.00px;font-size:7.6px;line-height:10px;color:#2f6096;letter-spacing:-0.173px;">Plan Objectives</span>
<span class="t" style="left:226.00px;top:407.00px;font-size:7.6px;line-height:10px;color:#2f6096;letter-spacing:-0.084px;">Optimization Objectives</span>
<span class="t" style="left:314.60px;top:407.00px;font-size:7.6px;line-height:10px;color:#2f6096;letter-spacing:-0.211px;">Dose Statistics</span>
<span class="t" style="left:371.90px;top:407.00px;font-size:7.6px;line-height:10px;color:#2f6096;letter-spacing:-0.225px;">Reference Points</span>
<span class="t" style="left:436.80px;top:407.00px;font-size:7.6px;line-height:10px;color:#2f6096;letter-spacing:-0.100px;">Calculation Models</span>
<span class="t" style="left:509.00px;top:407.00px;font-size:7.6px;line-height:10px;color:#2f6096;letter-spacing:-0.181px;">Plan Sum</span>
<div class="a" style="left:30px;top:404px;width:1.2px;height:13.6px;background:linear-gradient(90deg,#c9d6e2,#f5f8fa)"></div>
<div class="a" style="left:60px;top:404px;width:1.2px;height:13.6px;background:linear-gradient(90deg,#c9d6e2,#f5f8fa)"></div>
<div class="a" style="left:136.8px;top:404px;width:1.2px;height:13.6px;background:linear-gradient(90deg,#c9d6e2,#f5f8fa)"></div>
<div class="a" style="left:207.6px;top:404px;width:1.2px;height:13.6px;background:linear-gradient(90deg,#c9d6e2,#f5f8fa)"></div>
<div class="a" style="left:308px;top:404px;width:1.2px;height:13.6px;background:linear-gradient(90deg,#c9d6e2,#f5f8fa)"></div>
<div class="a" style="left:365.5px;top:404px;width:1.2px;height:13.6px;background:linear-gradient(90deg,#c9d6e2,#f5f8fa)"></div>
<div class="a" style="left:430.5px;top:404px;width:1.2px;height:13.6px;background:linear-gradient(90deg,#c9d6e2,#f5f8fa)"></div>
<div class="a" style="left:503px;top:404px;width:1.2px;height:13.6px;background:linear-gradient(90deg,#c9d6e2,#f5f8fa)"></div>
<div class="a" style="left:544px;top:404px;width:1.2px;height:13.6px;background:linear-gradient(90deg,#c9d6e2,#f5f8fa)"></div>
<div class="a" style="left:65px;top:406.4px;width:6px;height:6px;background:#fff;border:.8px solid #8c8c8c"></div>
<div class="a" style="left:141px;top:406.4px;width:6px;height:6px;background:#fff;border:.8px solid #8c8c8c"></div>
<div class="a" style="left:212px;top:406.4px;width:6px;height:6px;background:#fff;border:.8px solid #8c8c8c"></div>
<div class="a" style="left:0px;top:418.2px;width:1080px;height:22px;background:linear-gradient(#8892ad,#7d88a4 50%,#77829e)"></div>
<div class="a" style="left:0px;top:418.2px;width:1080px;height:0.8px;background:#a9b1c6"></div>
<div class="a" style="left:0.6px;top:418.2px;width:1.2px;height:22px;background:linear-gradient(90deg,#6d7893,#aab3c7)"></div>
<span class="t" style="left:12.21px;top:425.00px;font-size:6.4px;line-height:10px;color:#eceff6;">Group</span>
<div class="a" style="left:40.4px;top:418.2px;width:1.2px;height:22px;background:linear-gradient(90deg,#6d7893,#aab3c7)"></div>
<span class="t" style="left:53.23px;top:425.00px;font-size:6.4px;line-height:10px;color:#eceff6;">Field ID</span>
<div class="a" style="left:86.9px;top:418.2px;width:1.2px;height:22px;background:linear-gradient(90deg,#6d7893,#aab3c7)"></div>
<span class="t" style="left:98.66px;top:425.00px;font-size:6.4px;line-height:10px;color:#eceff6;">Technique</span>
<div class="a" style="left:138.4px;top:418.2px;width:1.2px;height:22px;background:linear-gradient(90deg,#6d7893,#aab3c7)"></div>
<span class="t" style="left:165.13px;top:425.00px;font-size:6.4px;line-height:10px;color:#eceff6;">Machine/Energy</span>
<div class="a" style="left:236.9px;top:418.2px;width:1.2px;height:22px;background:linear-gradient(90deg,#6d7893,#aab3c7)"></div>
<span class="t" style="left:266.24px;top:425.00px;font-size:6.4px;line-height:10px;color:#eceff6;">MLC</span>
<div class="a" style="left:307.9px;top:418.2px;width:1.2px;height:22px;background:linear-gradient(90deg,#6d7893,#aab3c7)"></div>
<span class="t" style="left:320.77px;top:425.00px;font-size:6.4px;line-height:10px;color:#eceff6;">Field Weight</span>
<div class="a" style="left:367.9px;top:418.2px;width:1.2px;height:22px;background:linear-gradient(90deg,#6d7893,#aab3c7)"></div>
<span class="t" style="left:387.50px;top:425.00px;font-size:6.4px;line-height:10px;color:#eceff6;">Scale</span>
<div class="a" style="left:421.9px;top:418.2px;width:1.2px;height:22px;background:linear-gradient(90deg,#6d7893,#aab3c7)"></div>
<span class="t" style="left:434.26px;top:421.00px;font-size:6.2px;line-height:10px;color:#eceff6;">Gantry Rtn</span>
<span class="t" style="left:442.36px;top:428.00px;font-size:6.2px;line-height:10px;color:#eceff6;">[deg]</span>
<div class="a" style="left:475.4px;top:418.2px;width:1.2px;height:22px;background:linear-gradient(90deg,#6d7893,#aab3c7)"></div>
<span class="t" style="left:488.22px;top:421.00px;font-size:6.2px;line-height:10px;color:#eceff6;">Coll Rtn</span>
<span class="t" style="left:492.36px;top:428.00px;font-size:6.2px;line-height:10px;color:#eceff6;">[deg]</span>
<div class="a" style="left:521.9px;top:418.2px;width:1.2px;height:22px;background:linear-gradient(90deg,#6d7893,#aab3c7)"></div>
<span class="t" style="left:533.60px;top:421.00px;font-size:6.2px;line-height:10px;color:#eceff6;">Couch Rtn</span>
<span class="t" style="left:541.36px;top:428.00px;font-size:6.2px;line-height:10px;color:#eceff6;">[deg]</span>
<div class="a" style="left:573.4px;top:418.2px;width:1.2px;height:22px;background:linear-gradient(90deg,#6d7893,#aab3c7)"></div>
<span class="t" style="left:585.67px;top:425.00px;font-size:6.4px;line-height:10px;color:#eceff6;">Wedge</span>
<div class="a" style="left:616.9px;top:418.2px;width:1.2px;height:22px;background:linear-gradient(90deg,#6d7893,#aab3c7)"></div>
<span class="t" style="left:628.60px;top:421.00px;font-size:6.2px;line-height:10px;color:#eceff6;">Field X</span>
<span class="t" style="left:632.40px;top:428.00px;font-size:6.2px;line-height:10px;color:#eceff6;">[cm]</span>
<div class="a" style="left:658.4px;top:418.2px;width:1.2px;height:22px;background:linear-gradient(90deg,#6d7893,#aab3c7)"></div>
<span class="t" style="left:673.71px;top:421.00px;font-size:6.2px;line-height:10px;color:#eceff6;">X1</span>
<span class="t" style="left:671.65px;top:428.00px;font-size:6.2px;line-height:10px;color:#eceff6;">[cm]</span>
<div class="a" style="left:695.4px;top:418.2px;width:1.2px;height:22px;background:linear-gradient(90deg,#6d7893,#aab3c7)"></div>
<span class="t" style="left:710.96px;top:421.00px;font-size:6.2px;line-height:10px;color:#eceff6;">X2</span>
<span class="t" style="left:708.90px;top:428.00px;font-size:6.2px;line-height:10px;color:#eceff6;">[cm]</span>
<div class="a" style="left:732.9px;top:418.2px;width:1.2px;height:22px;background:linear-gradient(90deg,#6d7893,#aab3c7)"></div>
<span class="t" style="left:743.41px;top:421.00px;font-size:6.2px;line-height:10px;color:#eceff6;">Field Y</span>
<span class="t" style="left:747.15px;top:428.00px;font-size:6.2px;line-height:10px;color:#eceff6;">[cm]</span>
<div class="a" style="left:771.9px;top:418.2px;width:1.2px;height:22px;background:linear-gradient(90deg,#6d7893,#aab3c7)"></div>
<span class="t" style="left:787.46px;top:421.00px;font-size:6.2px;line-height:10px;color:#eceff6;">Y1</span>
<span class="t" style="left:785.40px;top:428.00px;font-size:6.2px;line-height:10px;color:#eceff6;">[cm]</span>
<div class="a" style="left:809.4px;top:418.2px;width:1.2px;height:22px;background:linear-gradient(90deg,#6d7893,#aab3c7)"></div>
<span class="t" style="left:824.96px;top:421.00px;font-size:6.2px;line-height:10px;color:#eceff6;">Y2</span>
<span class="t" style="left:822.90px;top:428.00px;font-size:6.2px;line-height:10px;color:#eceff6;">[cm]</span>
<div class="a" style="left:846.9px;top:418.2px;width:1.2px;height:22px;background:linear-gradient(90deg,#6d7893,#aab3c7)"></div>
<span class="t" style="left:857.68px;top:425.00px;font-size:6.4px;line-height:10px;color:#eceff6;">X [cm]</span>
<div class="a" style="left:885.4px;top:418.2px;width:1.2px;height:22px;background:linear-gradient(90deg,#6d7893,#aab3c7)"></div>
<span class="t" style="left:895.74px;top:425.00px;font-size:6.4px;line-height:10px;color:#eceff6;">Y [cm]</span>
<div class="a" style="left:922.9px;top:418.2px;width:1.2px;height:22px;background:linear-gradient(90deg,#6d7893,#aab3c7)"></div>
<span class="t" style="left:934.11px;top:425.00px;font-size:6.4px;line-height:10px;color:#eceff6;">Z [cm]</span>
<div class="a" style="left:961.9px;top:418.2px;width:1.2px;height:22px;background:linear-gradient(90deg,#6d7893,#aab3c7)"></div>
<span class="t" style="left:974.10px;top:421.00px;font-size:6.2px;line-height:10px;color:#eceff6;">Calculated</span>
<span class="t" style="left:975.66px;top:428.00px;font-size:6.2px;line-height:10px;color:#eceff6;">SSD [cm]</span>
<div class="a" style="left:1014.4px;top:418.2px;width:1.2px;height:22px;background:linear-gradient(90deg,#6d7893,#aab3c7)"></div>
<span class="t" style="left:1030.77px;top:425.00px;font-size:6.4px;line-height:10px;color:#eceff6;">MU</span>
<div class="a" style="left:1055.9px;top:418.2px;width:1.2px;height:22px;background:linear-gradient(90deg,#6d7893,#aab3c7)"></div>
<span class="t" style="left:1064.31px;top:421.00px;font-size:6.2px;line-height:10px;color:#eceff6;">Ref.</span>
<span class="t" style="left:1063.63px;top:428.00px;font-size:6.2px;line-height:10px;color:#eceff6;">[cGy</span>
<div class="a" style="left:1.2px;top:440.2px;width:38.8px;height:10.23px;background:#f1f1f1;border-right:1px solid #8a8a8a;border-bottom:1.2px solid #8a8a8a;border-top:.6px solid #fff"></div>
<div class="a" style="left:20.2px;top:443.2px;width:0.8px;height:4.6px;background:#333"></div>
<div class="a" style="left:41px;top:440.2px;width:46.5px;height:10.83px;background:#fff;border-right:1px solid #b9c5d4;border-bottom:1px solid #bcc8d6"></div>
<span class="t" style="left:53.30px;top:441.00px;font-size:7.3px;line-height:10px;color:#222;">Field 1</span>
<div class="a" style="left:87.5px;top:440.2px;width:51.5px;height:10.83px;background:#dde5ee;border-right:1px solid #b9c5d4;border-bottom:1px solid #bcc8d6"></div>
<span class="t" style="left:98.58px;top:441.00px;font-size:7.3px;line-height:10px;color:#222;">STATIC-I</span>
<div class="a" style="left:139px;top:440.2px;width:98.5px;height:10.83px;background:#dde5ee;border-right:1px solid #b9c5d4;border-bottom:1px solid #bcc8d6"></div>
<span class="t" style="left:150.78px;top:441.00px;font-size:7.3px;line-height:10px;color:#222;">VitalBeamSN4529 - 6X</span>
<div class="a" style="left:237.5px;top:440.2px;width:71.0px;height:10.83px;background:#dde5ee;border-right:1px solid #b9c5d4;border-bottom:1px solid #bcc8d6"></div>
<span class="t" style="left:249.27px;top:441.00px;font-size:7.3px;line-height:10px;color:#222;">Dose Dynamic</span>
<div class="a" style="left:308.5px;top:440.2px;width:60.0px;height:10.83px;background:#fff;border-right:1px solid #b9c5d4;border-bottom:1px solid #bcc8d6"></div>
<span class="t" style="left:346.63px;top:441.00px;font-size:7.3px;line-height:10px;color:#222;">1.000</span>
<div class="a" style="left:368.5px;top:440.2px;width:54.0px;height:10.83px;background:#dde5ee;border-right:1px solid #b9c5d4;border-bottom:1px solid #bcc8d6"></div>
<span class="t" style="left:379.27px;top:441.00px;font-size:7.3px;line-height:10px;color:#222;">IEC61217</span>
<div class="a" style="left:422.5px;top:440.2px;width:53.5px;height:10.83px;background:#fff;border-right:1px solid #b9c5d4;border-bottom:1px solid #bcc8d6"></div>
<span class="t" style="left:462.25px;top:441.00px;font-size:7.3px;line-height:10px;color:#222;">0.0</span>
<div class="a" style="left:476px;top:440.2px;width:46.5px;height:10.83px;background:#fff;border-right:1px solid #b9c5d4;border-bottom:1px solid #bcc8d6"></div>
<span class="t" style="left:508.75px;top:441.00px;font-size:7.3px;line-height:10px;color:#222;">0.0</span>
<div class="a" style="left:522.5px;top:440.2px;width:51.5px;height:10.83px;background:#fff;border-right:1px solid #b9c5d4;border-bottom:1px solid #bcc8d6"></div>
<span class="t" style="left:560.25px;top:441.00px;font-size:7.3px;line-height:10px;color:#222;">0.0</span>
<div class="a" style="left:574px;top:440.2px;width:43.5px;height:10.83px;background:#dde5ee;border-right:1px solid #b9c5d4;border-bottom:1px solid #bcc8d6"></div>
<span class="t" style="left:587.02px;top:441.00px;font-size:7.3px;line-height:10px;color:#222;">None</span>
<div class="a" style="left:617.5px;top:440.2px;width:41.5px;height:10.83px;background:#fff;border-right:1px solid #b9c5d4;border-bottom:1px solid #bcc8d6"></div>
<span class="t" style="left:645.25px;top:441.00px;font-size:7.3px;line-height:10px;color:#222;">7.7</span>
<div class="a" style="left:659px;top:440.2px;width:37px;height:10.83px;background:#fff;border-right:1px solid #b9c5d4;border-bottom:1px solid #bcc8d6"></div>
<span class="t" style="left:679.82px;top:441.00px;font-size:7.3px;line-height:10px;color:#222;">-3.7</span>
<div class="a" style="left:696px;top:440.2px;width:37.5px;height:10.83px;background:#fff;border-right:1px solid #b9c5d4;border-bottom:1px solid #bcc8d6"></div>
<span class="t" style="left:715.49px;top:441.00px;font-size:7.3px;line-height:10px;color:#222;">+4.0</span>
<div class="a" style="left:733.5px;top:440.2px;width:39.0px;height:10.83px;background:#fff;border-right:1px solid #b9c5d4;border-bottom:1px solid #bcc8d6"></div>
<span class="t" style="left:758.75px;top:441.00px;font-size:7.3px;line-height:10px;color:#222;">7.4</span>
<div class="a" style="left:772.5px;top:440.2px;width:37.5px;height:10.83px;background:#fff;border-right:1px solid #b9c5d4;border-bottom:1px solid #bcc8d6"></div>
<span class="t" style="left:793.82px;top:441.00px;font-size:7.3px;line-height:10px;color:#222;">-3.7</span>
<div class="a" style="left:810px;top:440.2px;width:37.5px;height:10.83px;background:#fff;border-right:1px solid #b9c5d4;border-bottom:1px solid #bcc8d6"></div>
<span class="t" style="left:829.49px;top:441.00px;font-size:7.3px;line-height:10px;color:#222;">+3.7</span>
<div class="a" style="left:847.5px;top:440.2px;width:38.5px;height:10.83px;background:#fff;border-right:1px solid #b9c5d4;border-bottom:1px solid #bcc8d6"></div>
<span class="t" style="left:865.76px;top:441.00px;font-size:7.3px;line-height:10px;color:#222;">-0.13</span>
<div class="a" style="left:886px;top:440.2px;width:37.5px;height:10.83px;background:#fff;border-right:1px solid #b9c5d4;border-bottom:1px solid #bcc8d6"></div>
<span class="t" style="left:905.69px;top:441.00px;font-size:7.3px;line-height:10px;color:#222;">3.30</span>
<div class="a" style="left:923.5px;top:440.2px;width:39.0px;height:10.83px;background:#fff;border-right:1px solid #b9c5d4;border-bottom:1px solid #bcc8d6"></div>
<span class="t" style="left:944.69px;top:441.00px;font-size:7.3px;line-height:10px;color:#222;">1.05</span>
<div class="a" style="left:962.5px;top:440.2px;width:52.5px;height:10.83px;background:#fff;border-right:1px solid #b9c5d4;border-bottom:1px solid #bcc8d6"></div>
<span class="t" style="left:997.19px;top:441.00px;font-size:7.3px;line-height:10px;color:#222;">93.9</span>
<div class="a" style="left:1015px;top:440.2px;width:41.5px;height:10.83px;background:#dde5ee;border-right:1px solid #b9c5d4;border-bottom:1px solid #bcc8d6"></div>
<span class="t" style="left:1034.63px;top:441.00px;font-size:7.3px;line-height:10px;color:#222;">148.1</span>
<div class="a" style="left:1056.5px;top:440.2px;width:43.5px;height:10.83px;background:#dde5ee;border-right:1px solid #b9c5d4;border-bottom:1px solid #bcc8d6"></div>
<div class="a" style="left:1.2px;top:451.03px;width:38.8px;height:10.23px;background:#f1f1f1;border-right:1px solid #8a8a8a;border-bottom:1.2px solid #8a8a8a;border-top:.6px solid #fff"></div>
<div class="a" style="left:20.2px;top:454.03px;width:0.8px;height:4.6px;background:#333"></div>
<div class="a" style="left:41px;top:451.03px;width:46.5px;height:10.83px;background:#fff;border-right:1px solid #b9c5d4;border-bottom:1px solid #bcc8d6"></div>
<span class="t" style="left:53.30px;top:452.00px;font-size:7.3px;line-height:10px;color:#222;">Field 2</span>
<div class="a" style="left:87.5px;top:451.03px;width:51.5px;height:10.83px;background:#dde5ee;border-right:1px solid #b9c5d4;border-bottom:1px solid #bcc8d6"></div>
<span class="t" style="left:98.58px;top:452.00px;font-size:7.3px;line-height:10px;color:#222;">STATIC-I</span>
<div class="a" style="left:139px;top:451.03px;width:98.5px;height:10.83px;background:#dde5ee;border-right:1px solid #b9c5d4;border-bottom:1px solid #bcc8d6"></div>
<span class="t" style="left:150.78px;top:452.00px;font-size:7.3px;line-height:10px;color:#222;">VitalBeamSN4529 - 6X</span>
<div class="a" style="left:237.5px;top:451.03px;width:71.0px;height:10.83px;background:#dde5ee;border-right:1px solid #b9c5d4;border-bottom:1px solid #bcc8d6"></div>
<span class="t" style="left:249.27px;top:452.00px;font-size:7.3px;line-height:10px;color:#222;">Dose Dynamic</span>
<div class="a" style="left:308.5px;top:451.03px;width:60.0px;height:10.83px;background:#fff;border-right:1px solid #b9c5d4;border-bottom:1px solid #bcc8d6"></div>
<span class="t" style="left:346.63px;top:452.00px;font-size:7.3px;line-height:10px;color:#222;">1.000</span>
<div class="a" style="left:368.5px;top:451.03px;width:54.0px;height:10.83px;background:#dde5ee;border-right:1px solid #b9c5d4;border-bottom:1px solid #bcc8d6"></div>
<span class="t" style="left:379.27px;top:452.00px;font-size:7.3px;line-height:10px;color:#222;">IEC61217</span>
<div class="a" style="left:422.5px;top:451.03px;width:53.5px;height:10.83px;background:#fff;border-right:1px solid #b9c5d4;border-bottom:1px solid #bcc8d6"></div>
<span class="t" style="left:458.19px;top:452.00px;font-size:7.3px;line-height:10px;color:#222;">52.0</span>
<div class="a" style="left:476px;top:451.03px;width:46.5px;height:10.83px;background:#fff;border-right:1px solid #b9c5d4;border-bottom:1px solid #bcc8d6"></div>
<span class="t" style="left:508.75px;top:452.00px;font-size:7.3px;line-height:10px;color:#222;">0.0</span>
<div class="a" style="left:522.5px;top:451.03px;width:51.5px;height:10.83px;background:#fff;border-right:1px solid #b9c5d4;border-bottom:1px solid #bcc8d6"></div>
<span class="t" style="left:560.25px;top:452.00px;font-size:7.3px;line-height:10px;color:#222;">0.0</span>
<div class="a" style="left:574px;top:451.03px;width:43.5px;height:10.83px;background:#dde5ee;border-right:1px solid #b9c5d4;border-bottom:1px solid #bcc8d6"></div>
<span class="t" style="left:587.02px;top:452.00px;font-size:7.3px;line-height:10px;color:#222;">None</span>
<div class="a" style="left:617.5px;top:451.03px;width:41.5px;height:10.83px;background:#fff;border-right:1px solid #b9c5d4;border-bottom:1px solid #bcc8d6"></div>
<span class="t" style="left:645.25px;top:452.00px;font-size:7.3px;line-height:10px;color:#222;">8.5</span>
<div class="a" style="left:659px;top:451.03px;width:37px;height:10.83px;background:#fff;border-right:1px solid #b9c5d4;border-bottom:1px solid #bcc8d6"></div>
<span class="t" style="left:679.82px;top:452.00px;font-size:7.3px;line-height:10px;color:#222;">-4.2</span>
<div class="a" style="left:696px;top:451.03px;width:37.5px;height:10.83px;background:#fff;border-right:1px solid #b9c5d4;border-bottom:1px solid #bcc8d6"></div>
<span class="t" style="left:715.49px;top:452.00px;font-size:7.3px;line-height:10px;color:#222;">+4.3</span>
<div class="a" style="left:733.5px;top:451.03px;width:39.0px;height:10.83px;background:#fff;border-right:1px solid #b9c5d4;border-bottom:1px solid #bcc8d6"></div>
<span class="t" style="left:758.75px;top:452.00px;font-size:7.3px;line-height:10px;color:#222;">7.9</span>
<div class="a" style="left:772.5px;top:451.03px;width:37.5px;height:10.83px;background:#fff;border-right:1px solid #b9c5d4;border-bottom:1px solid #bcc8d6"></div>
<span class="t" style="left:793.82px;top:452.00px;font-size:7.3px;line-height:10px;color:#222;">-3.7</span>
<div class="a" style="left:810px;top:451.03px;width:37.5px;height:10.83px;background:#fff;border-right:1px solid #b9c5d4;border-bottom:1px solid #bcc8d6"></div>
<span class="t" style="left:829.49px;top:452.00px;font-size:7.3px;line-height:10px;color:#222;">+4.2</span>
<div class="a" style="left:847.5px;top:451.03px;width:38.5px;height:10.83px;background:#fff;border-right:1px solid #b9c5d4;border-bottom:1px solid #bcc8d6"></div>
<span class="t" style="left:865.76px;top:452.00px;font-size:7.3px;line-height:10px;color:#222;">-0.13</span>
<div class="a" style="left:886px;top:451.03px;width:37.5px;height:10.83px;background:#fff;border-right:1px solid #b9c5d4;border-bottom:1px solid #bcc8d6"></div>
<span class="t" style="left:905.69px;top:452.00px;font-size:7.3px;line-height:10px;color:#222;">3.30</span>
<div class="a" style="left:923.5px;top:451.03px;width:39.0px;height:10.83px;background:#fff;border-right:1px solid #b9c5d4;border-bottom:1px solid #bcc8d6"></div>
<span class="t" style="left:944.69px;top:452.00px;font-size:7.3px;line-height:10px;color:#222;">1.05</span>
<div class="a" style="left:962.5px;top:451.03px;width:52.5px;height:10.83px;background:#fff;border-right:1px solid #b9c5d4;border-bottom:1px solid #bcc8d6"></div>
<span class="t" style="left:997.19px;top:452.00px;font-size:7.3px;line-height:10px;color:#222;">94.1</span>
<div class="a" style="left:1015px;top:451.03px;width:41.5px;height:10.83px;background:#dde5ee;border-right:1px solid #b9c5d4;border-bottom:1px solid #bcc8d6"></div>
<span class="t" style="left:1038.69px;top:452.00px;font-size:7.3px;line-height:10px;color:#222;">85.2</span>
<div class="a" style="left:1056.5px;top:451.03px;width:43.5px;height:10.83px;background:#dde5ee;border-right:1px solid #b9c5d4;border-bottom:1px solid #bcc8d6"></div>
<div class="a" style="left:1.2px;top:461.86px;width:38.8px;height:10.23px;background:#f1f1f1;border-right:1px solid #8a8a8a;border-bottom:1.2px solid #8a8a8a;border-top:.6px solid #fff"></div>
<div class="a" style="left:20.2px;top:464.86px;width:0.8px;height:4.6px;background:#333"></div>
<div class="a" style="left:41px;top:461.86px;width:46.5px;height:10.83px;background:#fff;border-right:1px solid #b9c5d4;border-bottom:1px solid #bcc8d6"></div>
<span class="t" style="left:53.30px;top:463.00px;font-size:7.3px;line-height:10px;color:#222;">Field 3</span>
<div class="a" style="left:87.5px;top:461.86px;width:51.5px;height:10.83px;background:#dde5ee;border-right:1px solid #b9c5d4;border-bottom:1px solid #bcc8d6"></div>
<span class="t" style="left:98.58px;top:463.00px;font-size:7.3px;line-height:10px;color:#222;">STATIC-I</span>
<div class="a" style="left:139px;top:461.86px;width:98.5px;height:10.83px;background:#dde5ee;border-right:1px solid #b9c5d4;border-bottom:1px solid #bcc8d6"></div>
<span class="t" style="left:150.78px;top:463.00px;font-size:7.3px;line-height:10px;color:#222;">VitalBeamSN4529 - 6X</span>
<div class="a" style="left:237.5px;top:461.86px;width:71.0px;height:10.83px;background:#dde5ee;border-right:1px solid #b9c5d4;border-bottom:1px solid #bcc8d6"></div>
<span class="t" style="left:249.27px;top:463.00px;font-size:7.3px;line-height:10px;color:#222;">Dose Dynamic</span>
<div class="a" style="left:308.5px;top:461.86px;width:60.0px;height:10.83px;background:#fff;border-right:1px solid #b9c5d4;border-bottom:1px solid #bcc8d6"></div>
<span class="t" style="left:346.63px;top:463.00px;font-size:7.3px;line-height:10px;color:#222;">1.000</span>
<div class="a" style="left:368.5px;top:461.86px;width:54.0px;height:10.83px;background:#dde5ee;border-right:1px solid #b9c5d4;border-bottom:1px solid #bcc8d6"></div>
<span class="t" style="left:379.27px;top:463.00px;font-size:7.3px;line-height:10px;color:#222;">IEC61217</span>
<div class="a" style="left:422.5px;top:461.86px;width:53.5px;height:10.83px;background:#fff;border-right:1px solid #b9c5d4;border-bottom:1px solid #bcc8d6"></div>
<span class="t" style="left:454.13px;top:463.00px;font-size:7.3px;line-height:10px;color:#222;">104.0</span>
<div class="a" style="left:476px;top:461.86px;width:46.5px;height:10.83px;background:#fff;border-right:1px solid #b9c5d4;border-bottom:1px solid #bcc8d6"></div>
<span class="t" style="left:508.75px;top:463.00px;font-size:7.3px;line-height:10px;color:#222;">0.0</span>
<div class="a" style="left:522.5px;top:461.86px;width:51.5px;height:10.83px;background:#fff;border-right:1px solid #b9c5d4;border-bottom:1px solid #bcc8d6"></div>
<span class="t" style="left:560.25px;top:463.00px;font-size:7.3px;line-height:10px;color:#222;">0.0</span>
<div class="a" style="left:574px;top:461.86px;width:43.5px;height:10.83px;background:#dde5ee;border-right:1px solid #b9c5d4;border-bottom:1px solid #bcc8d6"></div>
<span class="t" style="left:587.02px;top:463.00px;font-size:7.3px;line-height:10px;color:#222;">None</span>
<div class="a" style="left:617.5px;top:461.86px;width:41.5px;height:10.83px;background:#fff;border-right:1px solid #b9c5d4;border-bottom:1px solid #bcc8d6"></div>
<span class="t" style="left:645.25px;top:463.00px;font-size:7.3px;line-height:10px;color:#222;">9.5</span>
<div class="a" style="left:659px;top:461.86px;width:37px;height:10.83px;background:#fff;border-right:1px solid #b9c5d4;border-bottom:1px solid #bcc8d6"></div>
<span class="t" style="left:679.82px;top:463.00px;font-size:7.3px;line-height:10px;color:#222;">-4.5</span>
<div class="a" style="left:696px;top:461.86px;width:37.5px;height:10.83px;background:#fff;border-right:1px solid #b9c5d4;border-bottom:1px solid #bcc8d6"></div>
<span class="t" style="left:715.49px;top:463.00px;font-size:7.3px;line-height:10px;color:#222;">+5.0</span>
<div class="a" style="left:733.5px;top:461.86px;width:39.0px;height:10.83px;background:#fff;border-right:1px solid #b9c5d4;border-bottom:1px solid #bcc8d6"></div>
<span class="t" style="left:758.75px;top:463.00px;font-size:7.3px;line-height:10px;color:#222;">7.9</span>
<div class="a" style="left:772.5px;top:461.86px;width:37.5px;height:10.83px;background:#fff;border-right:1px solid #b9c5d4;border-bottom:1px solid #bcc8d6"></div>
<span class="t" style="left:793.82px;top:463.00px;font-size:7.3px;line-height:10px;color:#222;">-3.7</span>
<div class="a" style="left:810px;top:461.86px;width:37.5px;height:10.83px;background:#fff;border-right:1px solid #b9c5d4;border-bottom:1px solid #bcc8d6"></div>
<span class="t" style="left:829.49px;top:463.00px;font-size:7.3px;line-height:10px;color:#222;">+4.2</span>
<div class="a" style="left:847.5px;top:461.86px;width:38.5px;height:10.83px;background:#fff;border-right:1px solid #b9c5d4;border-bottom:1px solid #bcc8d6"></div>
<span class="t" style="left:865.76px;top:463.00px;font-size:7.3px;line-height:10px;color:#222;">-0.13</span>
<div class="a" style="left:886px;top:461.86px;width:37.5px;height:10.83px;background:#fff;border-right:1px solid #b9c5d4;border-bottom:1px solid #bcc8d6"></div>
<span class="t" style="left:905.69px;top:463.00px;font-size:7.3px;line-height:10px;color:#222;">3.30</span>
<div class="a" style="left:923.5px;top:461.86px;width:39.0px;height:10.83px;background:#fff;border-right:1px solid #b9c5d4;border-bottom:1px solid #bcc8d6"></div>
<span class="t" style="left:944.69px;top:463.00px;font-size:7.3px;line-height:10px;color:#222;">1.05</span>
<div class="a" style="left:962.5px;top:461.86px;width:52.5px;height:10.83px;background:#fff;border-right:1px solid #b9c5d4;border-bottom:1px solid #bcc8d6"></div>
<span class="t" style="left:997.19px;top:463.00px;font-size:7.3px;line-height:10px;color:#222;">92.5</span>
<div class="a" style="left:1015px;top:461.86px;width:41.5px;height:10.83px;background:#dde5ee;border-right:1px solid #b9c5d4;border-bottom:1px solid #bcc8d6"></div>
<span class="t" style="left:1034.63px;top:463.00px;font-size:7.3px;line-height:10px;color:#222;">128.8</span>
<div class="a" style="left:1056.5px;top:461.86px;width:43.5px;height:10.83px;background:#dde5ee;border-right:1px solid #b9c5d4;border-bottom:1px solid #bcc8d6"></div>
<div class="a" style="left:1.2px;top:472.69px;width:38.8px;height:10.23px;background:#f1f1f1;border-right:1px solid #8a8a8a;border-bottom:1.2px solid #8a8a8a;border-top:.6px solid #fff"></div>
<div class="a" style="left:20.2px;top:475.69px;width:0.8px;height:4.6px;background:#333"></div>
<div class="a" style="left:41px;top:472.69px;width:46.5px;height:10.83px;background:#fff;border-right:1px solid #b9c5d4;border-bottom:1px solid #bcc8d6"></div>
<span class="t" style="left:53.30px;top:474.00px;font-size:7.3px;line-height:10px;color:#222;">Field 4</span>
<div class="a" style="left:87.5px;top:472.69px;width:51.5px;height:10.83px;background:#dde5ee;border-right:1px solid #b9c5d4;border-bottom:1px solid #bcc8d6"></div>
<span class="t" style="left:98.58px;top:474.00px;font-size:7.3px;line-height:10px;color:#222;">STATIC-I</span>
<div class="a" style="left:139px;top:472.69px;width:98.5px;height:10.83px;background:#dde5ee;border-right:1px solid #b9c5d4;border-bottom:1px solid #bcc8d6"></div>
<span class="t" style="left:150.78px;top:474.00px;font-size:7.3px;line-height:10px;color:#222;">VitalBeamSN4529 - 6X</span>
<div class="a" style="left:237.5px;top:472.69px;width:71.0px;height:10.83px;background:#dde5ee;border-right:1px solid #b9c5d4;border-bottom:1px solid #bcc8d6"></div>
<span class="t" style="left:249.27px;top:474.00px;font-size:7.3px;line-height:10px;color:#222;">Dose Dynamic</span>
<div class="a" style="left:308.5px;top:472.69px;width:60.0px;height:10.83px;background:#fff;border-right:1px solid #b9c5d4;border-bottom:1px solid #bcc8d6"></div>
<span class="t" style="left:346.63px;top:474.00px;font-size:7.3px;line-height:10px;color:#222;">1.000</span>
<div class="a" style="left:368.5px;top:472.69px;width:54.0px;height:10.83px;background:#dde5ee;border-right:1px solid #b9c5d4;border-bottom:1px solid #bcc8d6"></div>
<span class="t" style="left:379.27px;top:474.00px;font-size:7.3px;line-height:10px;color:#222;">IEC61217</span>
<div class="a" style="left:422.5px;top:472.69px;width:53.5px;height:10.83px;background:#fff;border-right:1px solid #b9c5d4;border-bottom:1px solid #bcc8d6"></div>
<span class="t" style="left:454.13px;top:474.00px;font-size:7.3px;line-height:10px;color:#222;">156.0</span>
<div class="a" style="left:476px;top:472.69px;width:46.5px;height:10.83px;background:#fff;border-right:1px solid #b9c5d4;border-bottom:1px solid #bcc8d6"></div>
<span class="t" style="left:508.75px;top:474.00px;font-size:7.3px;line-height:10px;color:#222;">0.0</span>
<div class="a" style="left:522.5px;top:472.69px;width:51.5px;height:10.83px;background:#fff;border-right:1px solid #b9c5d4;border-bottom:1px solid #bcc8d6"></div>
<span class="t" style="left:560.25px;top:474.00px;font-size:7.3px;line-height:10px;color:#222;">0.0</span>
<div class="a" style="left:574px;top:472.69px;width:43.5px;height:10.83px;background:#dde5ee;border-right:1px solid #b9c5d4;border-bottom:1px solid #bcc8d6"></div>
<span class="t" style="left:587.02px;top:474.00px;font-size:7.3px;line-height:10px;color:#222;">None</span>
<div class="a" style="left:617.5px;top:472.69px;width:41.5px;height:10.83px;background:#fff;border-right:1px solid #b9c5d4;border-bottom:1px solid #bcc8d6"></div>
<span class="t" style="left:645.25px;top:474.00px;font-size:7.3px;line-height:10px;color:#222;">7.7</span>
<div class="a" style="left:659px;top:472.69px;width:37px;height:10.83px;background:#fff;border-right:1px solid #b9c5d4;border-bottom:1px solid #bcc8d6"></div>
<span class="t" style="left:679.82px;top:474.00px;font-size:7.3px;line-height:10px;color:#222;">-4.0</span>
<div class="a" style="left:696px;top:472.69px;width:37.5px;height:10.83px;background:#fff;border-right:1px solid #b9c5d4;border-bottom:1px solid #bcc8d6"></div>
<span class="t" style="left:715.49px;top:474.00px;font-size:7.3px;line-height:10px;color:#222;">+3.7</span>
<div class="a" style="left:733.5px;top:472.69px;width:39.0px;height:10.83px;background:#fff;border-right:1px solid #b9c5d4;border-bottom:1px solid #bcc8d6"></div>
<span class="t" style="left:758.75px;top:474.00px;font-size:7.3px;line-height:10px;color:#222;">7.4</span>
<div class="a" style="left:772.5px;top:472.69px;width:37.5px;height:10.83px;background:#fff;border-right:1px solid #b9c5d4;border-bottom:1px solid #bcc8d6"></div>
<span class="t" style="left:793.82px;top:474.00px;font-size:7.3px;line-height:10px;color:#222;">-3.7</span>
<div class="a" style="left:810px;top:472.69px;width:37.5px;height:10.83px;background:#fff;border-right:1px solid #b9c5d4;border-bottom:1px solid #bcc8d6"></div>
<span class="t" style="left:829.49px;top:474.00px;font-size:7.3px;line-height:10px;color:#222;">+3.7</span>
<div class="a" style="left:847.5px;top:472.69px;width:38.5px;height:10.83px;background:#fff;border-right:1px solid #b9c5d4;border-bottom:1px solid #bcc8d6"></div>
<span class="t" style="left:865.76px;top:474.00px;font-size:7.3px;line-height:10px;color:#222;">-0.13</span>
<div class="a" style="left:886px;top:472.69px;width:37.5px;height:10.83px;background:#fff;border-right:1px solid #b9c5d4;border-bottom:1px solid #bcc8d6"></div>
<span class="t" style="left:905.69px;top:474.00px;font-size:7.3px;line-height:10px;color:#222;">3.30</span>
<div class="a" style="left:923.5px;top:472.69px;width:39.0px;height:10.83px;background:#fff;border-right:1px solid #b9c5d4;border-bottom:1px solid #bcc8d6"></div>
<span class="t" style="left:944.69px;top:474.00px;font-size:7.3px;line-height:10px;color:#222;">1.05</span>
<div class="a" style="left:962.5px;top:472.69px;width:52.5px;height:10.83px;background:#fff;border-right:1px solid #b9c5d4;border-bottom:1px solid #bcc8d6"></div>
<span class="t" style="left:997.19px;top:474.00px;font-size:7.3px;line-height:10px;color:#222;">88.8</span>
<div class="a" style="left:1015px;top:472.69px;width:41.5px;height:10.83px;background:#dde5ee;border-right:1px solid #b9c5d4;border-bottom:1px solid #bcc8d6"></div>
<span class="t" style="left:1034.63px;top:474.00px;font-size:7.3px;line-height:10px;color:#222;">107.5</span>
<div class="a" style="left:1056.5px;top:472.69px;width:43.5px;height:10.83px;background:#dde5ee;border-right:1px solid #b9c5d4;border-bottom:1px solid #bcc8d6"></div>
<div class="a" style="left:1.2px;top:483.52px;width:38.8px;height:10.23px;background:#f1f1f1;border-right:1px solid #8a8a8a;border-bottom:1.2px solid #8a8a8a;border-top:.6px solid #fff"></div>
<div class="a" style="left:20.2px;top:486.52px;width:0.8px;height:4.6px;background:#333"></div>
<div class="a" style="left:41px;top:483.52px;width:46.5px;height:10.83px;background:#fff;border-right:1px solid #b9c5d4;border-bottom:1px solid #bcc8d6"></div>
<span class="t" style="left:53.30px;top:484.00px;font-size:7.3px;line-height:10px;color:#222;">Field 5</span>
<div class="a" style="left:87.5px;top:483.52px;width:51.5px;height:10.83px;background:#dde5ee;border-right:1px solid #b9c5d4;border-bottom:1px solid #bcc8d6"></div>
<span class="t" style="left:98.58px;top:484.00px;font-size:7.3px;line-height:10px;color:#222;">STATIC-I</span>
<div class="a" style="left:139px;top:483.52px;width:98.5px;height:10.83px;background:#dde5ee;border-right:1px solid #b9c5d4;border-bottom:1px solid #bcc8d6"></div>
<span class="t" style="left:150.78px;top:484.00px;font-size:7.3px;line-height:10px;color:#222;">VitalBeamSN4529 - 6X</span>
<div class="a" style="left:237.5px;top:483.52px;width:71.0px;height:10.83px;background:#dde5ee;border-right:1px solid #b9c5d4;border-bottom:1px solid #bcc8d6"></div>
<span class="t" style="left:249.27px;top:484.00px;font-size:7.3px;line-height:10px;color:#222;">Dose Dynamic</span>
<div class="a" style="left:308.5px;top:483.52px;width:60.0px;height:10.83px;background:#fff;border-right:1px solid #b9c5d4;border-bottom:1px solid #bcc8d6"></div>
<span class="t" style="left:346.63px;top:484.00px;font-size:7.3px;line-height:10px;color:#222;">1.000</span>
<div class="a" style="left:368.5px;top:483.52px;width:54.0px;height:10.83px;background:#dde5ee;border-right:1px solid #b9c5d4;border-bottom:1px solid #bcc8d6"></div>
<span class="t" style="left:379.27px;top:484.00px;font-size:7.3px;line-height:10px;color:#222;">IEC61217</span>
<div class="a" style="left:422.5px;top:483.52px;width:53.5px;height:10.83px;background:#fff;border-right:1px solid #b9c5d4;border-bottom:1px solid #bcc8d6"></div>
<span class="t" style="left:454.13px;top:484.00px;font-size:7.3px;line-height:10px;color:#222;">208.0</span>
<div class="a" style="left:476px;top:483.52px;width:46.5px;height:10.83px;background:#fff;border-right:1px solid #b9c5d4;border-bottom:1px solid #bcc8d6"></div>
<span class="t" style="left:508.75px;top:484.00px;font-size:7.3px;line-height:10px;color:#222;">0.0</span>
<div class="a" style="left:522.5px;top:483.52px;width:51.5px;height:10.83px;background:#fff;border-right:1px solid #b9c5d4;border-bottom:1px solid #bcc8d6"></div>
<span class="t" style="left:560.25px;top:484.00px;font-size:7.3px;line-height:10px;color:#222;">0.0</span>
<div class="a" style="left:574px;top:483.52px;width:43.5px;height:10.83px;background:#dde5ee;border-right:1px solid #b9c5d4;border-bottom:1px solid #bcc8d6"></div>
<span class="t" style="left:587.02px;top:484.00px;font-size:7.3px;line-height:10px;color:#222;">None</span>
<div class="a" style="left:617.5px;top:483.52px;width:41.5px;height:10.83px;background:#fff;border-right:1px solid #b9c5d4;border-bottom:1px solid #bcc8d6"></div>
<span class="t" style="left:645.25px;top:484.00px;font-size:7.3px;line-height:10px;color:#222;">7.5</span>
<div class="a" style="left:659px;top:483.52px;width:37px;height:10.83px;background:#fff;border-right:1px solid #b9c5d4;border-bottom:1px solid #bcc8d6"></div>
<span class="t" style="left:679.82px;top:484.00px;font-size:7.3px;line-height:10px;color:#222;">-4.0</span>
<div class="a" style="left:696px;top:483.52px;width:37.5px;height:10.83px;background:#fff;border-right:1px solid #b9c5d4;border-bottom:1px solid #bcc8d6"></div>
<span class="t" style="left:715.49px;top:484.00px;font-size:7.3px;line-height:10px;color:#222;">+3.5</span>
<div class="a" style="left:733.5px;top:483.52px;width:39.0px;height:10.83px;background:#fff;border-right:1px solid #b9c5d4;border-bottom:1px solid #bcc8d6"></div>
<span class="t" style="left:758.75px;top:484.00px;font-size:7.3px;line-height:10px;color:#222;">7.4</span>
<div class="a" style="left:772.5px;top:483.52px;width:37.5px;height:10.83px;background:#fff;border-right:1px solid #b9c5d4;border-bottom:1px solid #bcc8d6"></div>
<span class="t" style="left:793.82px;top:484.00px;font-size:7.3px;line-height:10px;color:#222;">-3.7</span>
<div class="a" style="left:810px;top:483.52px;width:37.5px;height:10.83px;background:#fff;border-right:1px solid #b9c5d4;border-bottom:1px solid #bcc8d6"></div>
<span class="t" style="left:829.49px;top:484.00px;font-size:7.3px;line-height:10px;color:#222;">+3.7</span>
<div class="a" style="left:847.5px;top:483.52px;width:38.5px;height:10.83px;background:#fff;border-right:1px solid #b9c5d4;border-bottom:1px solid #bcc8d6"></div>
<span class="t" style="left:865.76px;top:484.00px;font-size:7.3px;line-height:10px;color:#222;">-0.13</span>
<div class="a" style="left:886px;top:483.52px;width:37.5px;height:10.83px;background:#fff;border-right:1px solid #b9c5d4;border-bottom:1px solid #bcc8d6"></div>
<span class="t" style="left:905.69px;top:484.00px;font-size:7.3px;line-height:10px;color:#222;">3.30</span>
<div class="a" style="left:923.5px;top:483.52px;width:39.0px;height:10.83px;background:#fff;border-right:1px solid #b9c5d4;border-bottom:1px solid #bcc8d6"></div>
<span class="t" style="left:944.69px;top:484.00px;font-size:7.3px;line-height:10px;color:#222;">1.05</span>
<div class="a" style="left:962.5px;top:483.52px;width:52.5px;height:10.83px;background:#fff;border-right:1px solid #b9c5d4;border-bottom:1px solid #bcc8d6"></div>
<span class="t" style="left:997.19px;top:484.00px;font-size:7.3px;line-height:10px;color:#222;">88.4</span>
<div class="a" style="left:1015px;top:483.52px;width:41.5px;height:10.83px;background:#dde5ee;border-right:1px solid #b9c5d4;border-bottom:1px solid #bcc8d6"></div>
<span class="t" style="left:1038.69px;top:484.00px;font-size:7.3px;line-height:10px;color:#222;">49.4</span>
<div class="a" style="left:1056.5px;top:483.52px;width:43.5px;height:10.83px;background:#dde5ee;border-right:1px solid #b9c5d4;border-bottom:1px solid #bcc8d6"></div>
<div class="a" style="left:1.2px;top:494.34999999999997px;width:38.8px;height:10.23px;background:#f1f1f1;border-right:1px solid #8a8a8a;border-bottom:1.2px solid #8a8a8a;border-top:.6px solid #fff"></div>
<div class="a" style="left:20.2px;top:497.34999999999997px;width:0.8px;height:4.6px;background:#333"></div>
<div class="a" style="left:41px;top:494.34999999999997px;width:46.5px;height:10.83px;background:#fff;border-right:1px solid #b9c5d4;border-bottom:1px solid #bcc8d6"></div>
<span class="t" style="left:53.30px;top:495.00px;font-size:7.3px;line-height:10px;color:#222;">Field 6</span>
<div class="a" style="left:87.5px;top:494.34999999999997px;width:51.5px;height:10.83px;background:#dde5ee;border-right:1px solid #b9c5d4;border-bottom:1px solid #bcc8d6"></div>
<span class="t" style="left:98.58px;top:495.00px;font-size:7.3px;line-height:10px;color:#222;">STATIC-I</span>
<div class="a" style="left:139px;top:494.34999999999997px;width:98.5px;height:10.83px;background:#dde5ee;border-right:1px solid #b9c5d4;border-bottom:1px solid #bcc8d6"></div>
<span class="t" style="left:150.78px;top:495.00px;font-size:7.3px;line-height:10px;color:#222;">VitalBeamSN4529 - 6X</span>
<div class="a" style="left:237.5px;top:494.34999999999997px;width:71.0px;height:10.83px;background:#dde5ee;border-right:1px solid #b9c5d4;border-bottom:1px solid #bcc8d6"></div>
<span class="t" style="left:249.27px;top:495.00px;font-size:7.3px;line-height:10px;color:#222;">Dose Dynamic</span>
<div class="a" style="left:308.5px;top:494.34999999999997px;width:60.0px;height:10.83px;background:#fff;border-right:1px solid #b9c5d4;border-bottom:1px solid #bcc8d6"></div>
<span class="t" style="left:346.63px;top:495.00px;font-size:7.3px;line-height:10px;color:#222;">1.000</span>
<div class="a" style="left:368.5px;top:494.34999999999997px;width:54.0px;height:10.83px;background:#dde5ee;border-right:1px solid #b9c5d4;border-bottom:1px solid #bcc8d6"></div>
<span class="t" style="left:379.27px;top:495.00px;font-size:7.3px;line-height:10px;color:#222;">IEC61217</span>
<div class="a" style="left:422.5px;top:494.34999999999997px;width:53.5px;height:10.83px;background:#fff;border-right:1px solid #b9c5d4;border-bottom:1px solid #bcc8d6"></div>
<span class="t" style="left:454.13px;top:495.00px;font-size:7.3px;line-height:10px;color:#222;">260.0</span>
<div class="a" style="left:476px;top:494.34999999999997px;width:46.5px;height:10.83px;background:#fff;border-right:1px solid #b9c5d4;border-bottom:1px solid #bcc8d6"></div>
<span class="t" style="left:508.75px;top:495.00px;font-size:7.3px;line-height:10px;color:#222;">0.0</span>
<div class="a" style="left:522.5px;top:494.34999999999997px;width:51.5px;height:10.83px;background:#fff;border-right:1px solid #b9c5d4;border-bottom:1px solid #bcc8d6"></div>
<span class="t" style="left:560.25px;top:495.00px;font-size:7.3px;line-height:10px;color:#222;">0.0</span>
<div class="a" style="left:574px;top:494.34999999999997px;width:43.5px;height:10.83px;background:#dde5ee;border-right:1px solid #b9c5d4;border-bottom:1px solid #bcc8d6"></div>
<span class="t" style="left:587.02px;top:495.00px;font-size:7.3px;line-height:10px;color:#222;">None</span>
<div class="a" style="left:617.5px;top:494.34999999999997px;width:41.5px;height:10.83px;background:#fff;border-right:1px solid #b9c5d4;border-bottom:1px solid #bcc8d6"></div>
<span class="t" style="left:645.25px;top:495.00px;font-size:7.3px;line-height:10px;color:#222;">9.5</span>
<div class="a" style="left:659px;top:494.34999999999997px;width:37px;height:10.83px;background:#fff;border-right:1px solid #b9c5d4;border-bottom:1px solid #bcc8d6"></div>
<span class="t" style="left:679.82px;top:495.00px;font-size:7.3px;line-height:10px;color:#222;">-4.8</span>
<div class="a" style="left:696px;top:494.34999999999997px;width:37.5px;height:10.83px;background:#fff;border-right:1px solid #b9c5d4;border-bottom:1px solid #bcc8d6"></div>
<span class="t" style="left:715.49px;top:495.00px;font-size:7.3px;line-height:10px;color:#222;">+4.7</span>
<div class="a" style="left:733.5px;top:494.34999999999997px;width:39.0px;height:10.83px;background:#fff;border-right:1px solid #b9c5d4;border-bottom:1px solid #bcc8d6"></div>
<span class="t" style="left:758.75px;top:495.00px;font-size:7.3px;line-height:10px;color:#222;">7.4</span>
<div class="a" style="left:772.5px;top:494.34999999999997px;width:37.5px;height:10.83px;background:#fff;border-right:1px solid #b9c5d4;border-bottom:1px solid #bcc8d6"></div>
<span class="t" style="left:793.82px;top:495.00px;font-size:7.3px;line-height:10px;color:#222;">-3.7</span>
<div class="a" style="left:810px;top:494.34999999999997px;width:37.5px;height:10.83px;background:#fff;border-right:1px solid #b9c5d4;border-bottom:1px solid #bcc8d6"></div>
<span class="t" style="left:829.49px;top:495.00px;font-size:7.3px;line-height:10px;color:#222;">+3.7</span>
<div class="a" style="left:847.5px;top:494.34999999999997px;width:38.5px;height:10.83px;background:#fff;border-right:1px solid #b9c5d4;border-bottom:1px solid #bcc8d6"></div>
<span class="t" style="left:865.76px;top:495.00px;font-size:7.3px;line-height:10px;color:#222;">-0.13</span>
<div class="a" style="left:886px;top:494.34999999999997px;width:37.5px;height:10.83px;background:#fff;border-right:1px solid #b9c5d4;border-bottom:1px solid #bcc8d6"></div>
<span class="t" style="left:905.69px;top:495.00px;font-size:7.3px;line-height:10px;color:#222;">3.30</span>
<div class="a" style="left:923.5px;top:494.34999999999997px;width:39.0px;height:10.83px;background:#fff;border-right:1px solid #b9c5d4;border-bottom:1px solid #bcc8d6"></div>
<span class="t" style="left:944.69px;top:495.00px;font-size:7.3px;line-height:10px;color:#222;">1.05</span>
<div class="a" style="left:962.5px;top:494.34999999999997px;width:52.5px;height:10.83px;background:#fff;border-right:1px solid #b9c5d4;border-bottom:1px solid #bcc8d6"></div>
<span class="t" style="left:997.19px;top:495.00px;font-size:7.3px;line-height:10px;color:#222;">91.1</span>
<div class="a" style="left:1015px;top:494.34999999999997px;width:41.5px;height:10.83px;background:#dde5ee;border-right:1px solid #b9c5d4;border-bottom:1px solid #bcc8d6"></div>
<span class="t" style="left:1035.18px;top:495.00px;font-size:7.3px;line-height:10px;color:#222;">114.8</span>
<div class="a" style="left:1056.5px;top:494.34999999999997px;width:43.5px;height:10.83px;background:#dde5ee;border-right:1px solid #b9c5d4;border-bottom:1px solid #bcc8d6"></div>
<div class="a" style="left:1.2px;top:505.18px;width:38.8px;height:10.23px;background:#f1f1f1;border-right:1px solid #8a8a8a;border-bottom:1.2px solid #8a8a8a;border-top:.6px solid #fff"></div>
<div class="a" style="left:20.2px;top:508.18px;width:0.8px;height:4.6px;background:#333"></div>
<div class="a" style="left:41px;top:505.18px;width:46.5px;height:10.83px;background:#fff;border-right:1px solid #b9c5d4;border-bottom:1px solid #bcc8d6"></div>
<span class="t" style="left:53.30px;top:506.00px;font-size:7.3px;line-height:10px;color:#222;">Field 7</span>
<div class="a" style="left:87.5px;top:505.18px;width:51.5px;height:10.83px;background:#dde5ee;border-right:1px solid #b9c5d4;border-bottom:1px solid #bcc8d6"></div>
<span class="t" style="left:98.58px;top:506.00px;font-size:7.3px;line-height:10px;color:#222;">STATIC-I</span>
<div class="a" style="left:139px;top:505.18px;width:98.5px;height:10.83px;background:#dde5ee;border-right:1px solid #b9c5d4;border-bottom:1px solid #bcc8d6"></div>
<span class="t" style="left:150.78px;top:506.00px;font-size:7.3px;line-height:10px;color:#222;">VitalBeamSN4529 - 6X</span>
<div class="a" style="left:237.5px;top:505.18px;width:71.0px;height:10.83px;background:#dde5ee;border-right:1px solid #b9c5d4;border-bottom:1px solid #bcc8d6"></div>
<span class="t" style="left:249.27px;top:506.00px;font-size:7.3px;line-height:10px;color:#222;">Dose Dynamic</span>
<div class="a" style="left:308.5px;top:505.18px;width:60.0px;height:10.83px;background:#fff;border-right:1px solid #b9c5d4;border-bottom:1px solid #bcc8d6"></div>
<span class="t" style="left:346.63px;top:506.00px;font-size:7.3px;line-height:10px;color:#222;">1.000</span>
<div class="a" style="left:368.5px;top:505.18px;width:54.0px;height:10.83px;background:#dde5ee;border-right:1px solid #b9c5d4;border-bottom:1px solid #bcc8d6"></div>
<span class="t" style="left:379.27px;top:506.00px;font-size:7.3px;line-height:10px;color:#222;">IEC61217</span>
<div class="a" style="left:422.5px;top:505.18px;width:53.5px;height:10.83px;background:#fff;border-right:1px solid #b9c5d4;border-bottom:1px solid #bcc8d6"></div>
<span class="t" style="left:454.13px;top:506.00px;font-size:7.3px;line-height:10px;color:#222;">208.0</span>
<div class="a" style="left:476px;top:505.18px;width:46.5px;height:10.83px;background:#fff;border-right:1px solid #b9c5d4;border-bottom:1px solid #bcc8d6"></div>
<span class="t" style="left:508.75px;top:506.00px;font-size:7.3px;line-height:10px;color:#222;">0.0</span>
<div class="a" style="left:522.5px;top:505.18px;width:51.5px;height:10.83px;background:#fff;border-right:1px solid #b9c5d4;border-bottom:1px solid #bcc8d6"></div>
<span class="t" style="left:560.25px;top:506.00px;font-size:7.3px;line-height:10px;color:#222;">0.0</span>
<div class="a" style="left:574px;top:505.18px;width:43.5px;height:10.83px;background:#dde5ee;border-right:1px solid #b9c5d4;border-bottom:1px solid #bcc8d6"></div>
<span class="t" style="left:587.02px;top:506.00px;font-size:7.3px;line-height:10px;color:#222;">None</span>
<div class="a" style="left:617.5px;top:505.18px;width:41.5px;height:10.83px;background:#fff;border-right:1px solid #b9c5d4;border-bottom:1px solid #bcc8d6"></div>
<span class="t" style="left:645.25px;top:506.00px;font-size:7.3px;line-height:10px;color:#222;">7.5</span>
<div class="a" style="left:659px;top:505.18px;width:37px;height:10.83px;background:#fff;border-right:1px solid #b9c5d4;border-bottom:1px solid #bcc8d6"></div>
<span class="t" style="left:679.82px;top:506.00px;font-size:7.3px;line-height:10px;color:#222;">-4.0</span>
<div class="a" style="left:696px;top:505.18px;width:37.5px;height:10.83px;background:#fff;border-right:1px solid #b9c5d4;border-bottom:1px solid #bcc8d6"></div>
<span class="t" style="left:715.49px;top:506.00px;font-size:7.3px;line-height:10px;color:#222;">+3.5</span>
<div class="a" style="left:733.5px;top:505.18px;width:39.0px;height:10.83px;background:#fff;border-right:1px solid #b9c5d4;border-bottom:1px solid #bcc8d6"></div>
<span class="t" style="left:758.75px;top:506.00px;font-size:7.3px;line-height:10px;color:#222;">7.4</span>
<div class="a" style="left:772.5px;top:505.18px;width:37.5px;height:10.83px;background:#fff;border-right:1px solid #b9c5d4;border-bottom:1px solid #bcc8d6"></div>
<span class="t" style="left:793.82px;top:506.00px;font-size:7.3px;line-height:10px;color:#222;">-3.7</span>
<div class="a" style="left:810px;top:505.18px;width:37.5px;height:10.83px;background:#fff;border-right:1px solid #b9c5d4;border-bottom:1px solid #bcc8d6"></div>
<span class="t" style="left:829.49px;top:506.00px;font-size:7.3px;line-height:10px;color:#222;">+3.7</span>
<div class="a" style="left:847.5px;top:505.18px;width:38.5px;height:10.83px;background:#fff;border-right:1px solid #b9c5d4;border-bottom:1px solid #bcc8d6"></div>
<span class="t" style="left:865.76px;top:506.00px;font-size:7.3px;line-height:10px;color:#222;">-0.13</span>
<div class="a" style="left:886px;top:505.18px;width:37.5px;height:10.83px;background:#fff;border-right:1px solid #b9c5d4;border-bottom:1px solid #bcc8d6"></div>
<span class="t" style="left:905.69px;top:506.00px;font-size:7.3px;line-height:10px;color:#222;">3.30</span>
<div class="a" style="left:923.5px;top:505.18px;width:39.0px;height:10.83px;background:#fff;border-right:1px solid #b9c5d4;border-bottom:1px solid #bcc8d6"></div>
<span class="t" style="left:944.69px;top:506.00px;font-size:7.3px;line-height:10px;color:#222;">1.05</span>
<div class="a" style="left:962.5px;top:505.18px;width:52.5px;height:10.83px;background:#fff;border-right:1px solid #b9c5d4;border-bottom:1px solid #bcc8d6"></div>
<span class="t" style="left:997.19px;top:506.00px;font-size:7.3px;line-height:10px;color:#222;">88.4</span>
<div class="a" style="left:1015px;top:505.18px;width:41.5px;height:10.83px;background:#dde5ee;border-right:1px solid #b9c5d4;border-bottom:1px solid #bcc8d6"></div>
<span class="t" style="left:1038.69px;top:506.00px;font-size:7.3px;line-height:10px;color:#222;">49.4</span>
<div class="a" style="left:1056.5px;top:505.18px;width:43.5px;height:10.83px;background:#dde5ee;border-right:1px solid #b9c5d4;border-bottom:1px solid #bcc8d6"></div>
<div class="a" style="left:0px;top:516.01px;width:1080px;height:0.8px;background:#b7c3d2"></div>
</body></html>
